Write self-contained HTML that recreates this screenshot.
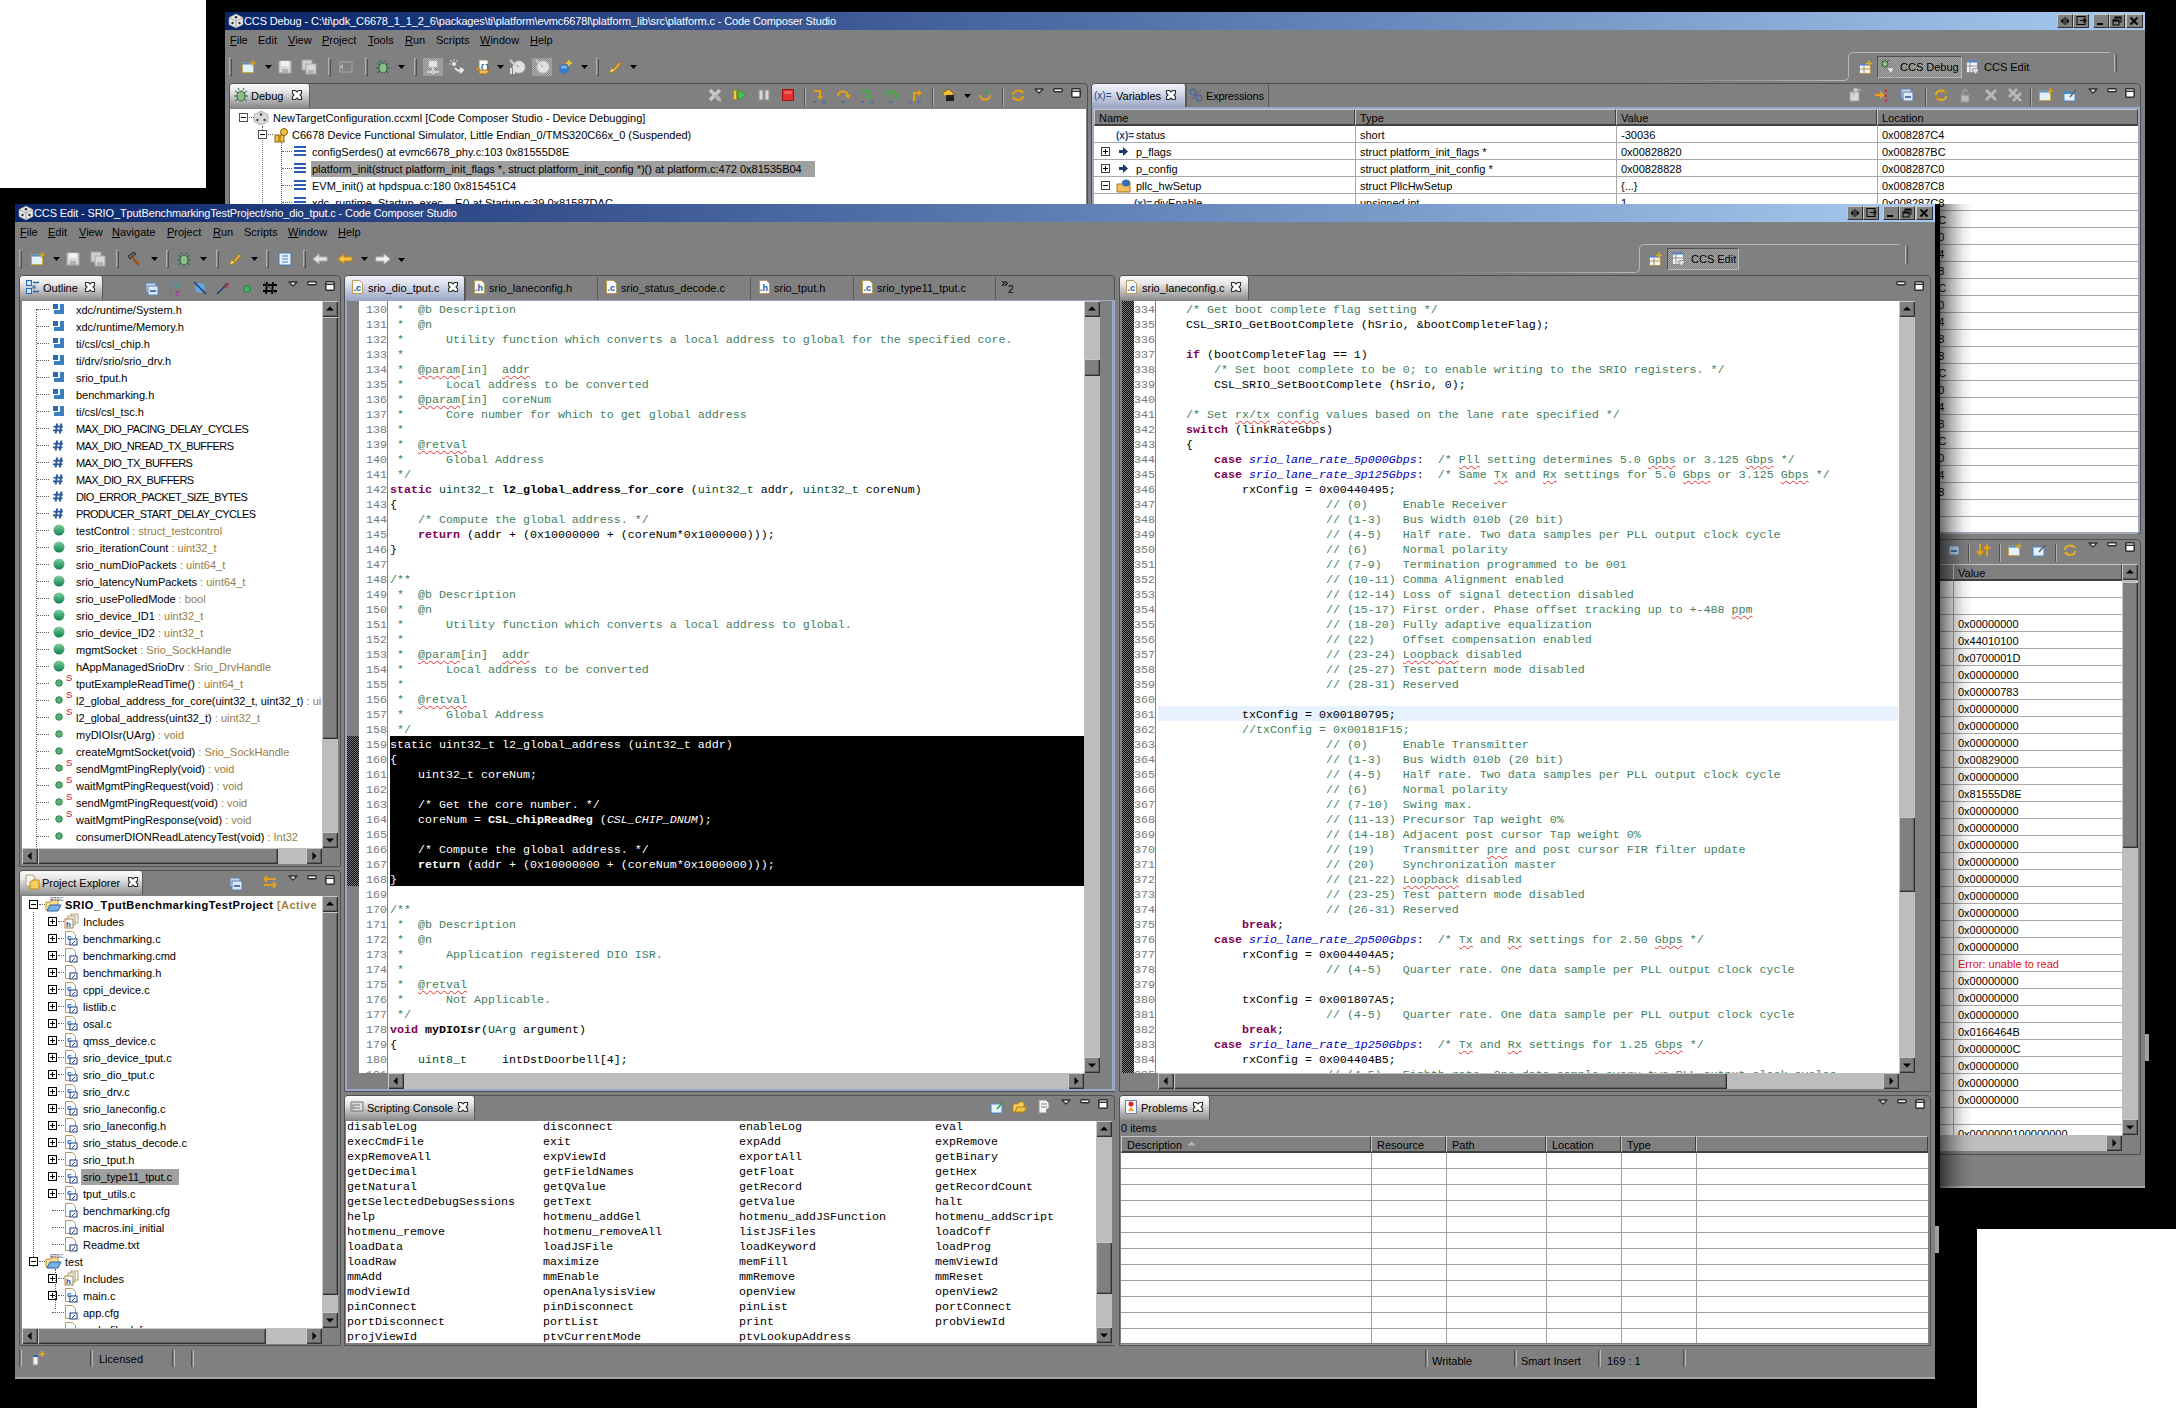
<!DOCTYPE html><html><head><meta charset="utf-8"><title>CCS</title><style>
*{margin:0;padding:0;box-sizing:border-box}
html,body{width:2176px;height:1408px;overflow:hidden;background:#000}
body{position:relative;font-family:"Liberation Sans",sans-serif;font-size:11px;color:#000}
div{position:absolute}
svg{display:block;overflow:visible}
.t{white-space:pre}
.m{font-family:"Liberation Mono",monospace;font-size:11.667px;white-space:pre;line-height:15px;height:15px}
.win{background:#808080}
.ttl{color:#fff;font-size:11px}
.pb{border:1px solid #505050;border-radius:4px 4px 0 0}
.tabg{background:linear-gradient(#fbfbfb,#e8e8e8 30%,#8e8e8e 95%);border-radius:3px 3px 0 0;border-right:1px solid #5a5a5a}
.tabb{background:linear-gradient(#f0f2f8,#dde2ee 30%,#9ea8c6 95%);border-radius:3px 3px 0 0;border-right:1px solid #5a5a5a}
.wh{background:#fff}
.b3{background:#808080;box-shadow:inset 1px 1px #c8c8c8,inset -1px -1px #303030,inset -2px -2px #606060}
.hdr{background:#808080;border-top:1px solid #c8c8c8;border-left:1px solid #c8c8c8;border-right:1px solid #404040;border-bottom:2px solid #404040}
.trough{background:#bdbdbd}
.cm{color:#3f7f5f}
.kw{color:#7f0055;font-weight:bold}
.fn{font-weight:bold}
.en{color:#0000c0;font-style:italic}
.ln{color:#787878}
.ty{color:#957d47}
.sep{border-left:1px solid #5a5a5a;border-right:1px solid #b8b8b8}
.ul{text-decoration:underline}

.sel .cm,.sel .kw,.sel .en,.sel .td{color:#fff}
.it{font-style:italic}
.td{color:#005032}
.sq{text-decoration:underline wavy #e83030;text-decoration-thickness:0.6px;text-underline-offset:1.5px}
u{text-decoration:underline;text-underline-offset:1px}
</style></head><body>
<div style="left:0px;top:0px;width:206px;height:188px;background:#fff"></div>
<div style="left:1977px;top:1229px;width:199px;height:179px;background:#fff"></div>
<div class="win" style="left:225px;top:12px;width:1920px;height:1176px;"></div>
<div style="left:225px;top:12px;width:1920px;height:18px;background:linear-gradient(to right,#0a246a,#a6caf0)"></div>
<div style="left:228px;top:13px;width:16px;height:16px"><svg width="16" height="16" viewBox="0 0 16 16"><path d="M8 1 L15 4.5 L15 11.5 L8 15 L1 11.5 L1 4.5Z" fill="#e8e8e8" stroke="#999" stroke-width="0.6"/><path d="M1 4.5 L8 8 L15 4.5 M8 8 L8 15" stroke="#888" stroke-width="0.8" fill="none"/><circle cx="8" cy="4.2" r="1.3" fill="#333"/><circle cx="4.5" cy="10" r="1.2" fill="#333"/><circle cx="11.5" cy="10" r="1.2" fill="#333"/></svg></div>
<div class="t" style="left:244px;top:12px;height:18px;line-height:18px;color:#fff;letter-spacing:-0.13px">CCS Debug - C:\ti\pdk_C6678_1_1_2_6\packages\ti\platform\evmc6678l\platform_lib\src\platform.c - Code Composer Studio</div>
<div style="left:2057px;top:14px;width:16px;height:14px;background:#808080;border-top:1px solid #c8c8c8;border-left:1px solid #c8c8c8;border-right:1px solid #303030;border-bottom:1px solid #303030"></div>
<div style="left:2060px;top:16px;width:10px;height:10px"><svg width="10" height="10"><path d="M0.5 5 L3.5 2 L3.5 8Z M9.5 5 L6.5 2 L6.5 8Z" fill="#000"/><rect x="4.5" y="1" width="1" height="8" fill="#000"/></svg></div>
<div style="left:2073px;top:14px;width:16px;height:14px;background:#808080;border-top:1px solid #c8c8c8;border-left:1px solid #c8c8c8;border-right:1px solid #303030;border-bottom:1px solid #303030"></div>
<div style="left:2076px;top:15px;width:11px;height:11px"><svg width="11" height="11"><rect x="1" y="1.5" width="8" height="8" fill="none" stroke="#000"/><path d="M4 5.5 L10 5.5 M7.5 3.5 L10 5.5 L7.5 7.5" stroke="#000" fill="none" stroke-width="1.2"/></svg></div>
<div style="left:2093px;top:14px;width:16px;height:14px;background:#808080;border-top:1px solid #c8c8c8;border-left:1px solid #c8c8c8;border-right:1px solid #303030;border-bottom:1px solid #303030"></div>
<div style="left:2097px;top:23px;width:6px;height:2px;background:#000"></div>
<div style="left:2109px;top:14px;width:16px;height:14px;background:#808080;border-top:1px solid #c8c8c8;border-left:1px solid #c8c8c8;border-right:1px solid #303030;border-bottom:1px solid #303030"></div>
<div style="left:2112px;top:16px;width:10px;height:10px"><svg width="10" height="10"><rect x="3" y="1" width="6" height="5" fill="none" stroke="#000" stroke-width="1"/><rect x="3" y="1" width="6" height="1.5" fill="#000"/><rect x="1" y="4" width="6" height="5" fill="#808080" stroke="#000" stroke-width="1"/><rect x="1" y="4" width="6" height="1.5" fill="#000"/></svg></div>
<div style="left:2126px;top:14px;width:17px;height:14px;background:#808080;border-top:1px solid #c8c8c8;border-left:1px solid #c8c8c8;border-right:1px solid #303030;border-bottom:1px solid #303030"></div>
<div style="left:2129px;top:16px;width:10px;height:10px"><svg width="10" height="10"><path d="M1.5 1.5 L8.5 8.5 M8.5 1.5 L1.5 8.5" stroke="#000" stroke-width="1.8"/></svg></div>
<div class="t" style="left:230px;top:30px;height:20px;line-height:20px"><u>F</u>ile</div>
<div class="t" style="left:258px;top:30px;height:20px;line-height:20px;">Edit</div>
<div class="t" style="left:288px;top:30px;height:20px;line-height:20px"><u>V</u>iew</div>
<div class="t" style="left:322px;top:30px;height:20px;line-height:20px"><u>P</u>roject</div>
<div class="t" style="left:368px;top:30px;height:20px;line-height:20px"><u>T</u>ools</div>
<div class="t" style="left:405px;top:30px;height:20px;line-height:20px"><u>R</u>un</div>
<div class="t" style="left:436px;top:30px;height:20px;line-height:20px;">Scripts</div>
<div class="t" style="left:480px;top:30px;height:20px;line-height:20px"><u>W</u>indow</div>
<div class="t" style="left:530px;top:30px;height:20px;line-height:20px"><u>H</u>elp</div>
<div style="left:229px;top:58px;width:3px;height:18px;border-left:1px solid #b0b0b0;border-right:1px solid #505050;border-top:1px solid #b0b0b0;border-bottom:1px solid #505050"></div>
<div style="left:241px;top:59px;width:16px;height:16px"><svg width="16" height="16" viewBox="0 0 16 16"><rect x="1.5" y="3.5" width="11" height="10" fill="#e4f0fb" stroke="#c9a84a"/><rect x="1.5" y="3.5" width="11" height="2" fill="#4a8ad0"/><path d="M12 1 L12 7 M9 4 L15 4" stroke="#d4a020" stroke-width="1.6"/></svg></div>
<div style="left:265px;top:65px;width:7px;height:4px"><svg width="7" height="4"><path d="M0 0 L7 0 L3.5 4Z" fill="#000"/></svg></div>
<div style="left:277px;top:59px;width:16px;height:16px"><svg width="16" height="16" viewBox="0 0 16 16"><rect x="2" y="2" width="12" height="12" fill="#d8d8d8" stroke="#a8a8a8"/><rect x="4" y="2" width="8" height="5" fill="#f0f0f0"/><rect x="5" y="10" width="6" height="4" fill="#b0b0b0"/></svg></div>
<div style="left:301px;top:59px;width:16px;height:16px"><svg width="16" height="16" viewBox="0 0 16 16"><rect x="1" y="1" width="10" height="10" fill="#d0d0d0" stroke="#a0a0a0"/><rect x="5" y="5" width="10" height="10" fill="#d8d8d8" stroke="#a8a8a8"/><rect x="7" y="11" width="6" height="4" fill="#b0b0b0"/></svg></div>
<div style="left:328px;top:58px;width:3px;height:18px;border-left:1px solid #b0b0b0;border-right:1px solid #505050;border-top:1px solid #b0b0b0;border-bottom:1px solid #505050"></div>
<div style="left:338px;top:59px;width:16px;height:16px"><svg width="16" height="16" viewBox="0 0 16 16"><rect x="2" y="3" width="12" height="10" fill="none" stroke="#a8a8a8"/><path d="M1 8 L5 5 L5 11Z" fill="#b0b0b0"/></svg></div>
<div style="left:365px;top:58px;width:3px;height:18px;border-left:1px solid #b0b0b0;border-right:1px solid #505050;border-top:1px solid #b0b0b0;border-bottom:1px solid #505050"></div>
<div style="left:375px;top:59px;width:16px;height:16px"><svg width="16" height="16" viewBox="0 0 16 16"><ellipse cx="8" cy="9" rx="4" ry="5" fill="#8cc080" stroke="#2c6050"/><path d="M2 4 L5 6 M14 4 L11 6 M1 9 L4 9 M15 9 L12 9 M2 14 L5 12 M14 14 L11 12 M6 3 L5 1 M10 3 L11 1" stroke="#2c6050" stroke-width="1"/></svg></div>
<div style="left:398px;top:65px;width:7px;height:4px"><svg width="7" height="4"><path d="M0 0 L7 0 L3.5 4Z" fill="#000"/></svg></div>
<div style="left:414px;top:58px;width:3px;height:18px;border-left:1px solid #b0b0b0;border-right:1px solid #505050;border-top:1px solid #b0b0b0;border-bottom:1px solid #505050"></div>
<div style="left:423px;top:58px;width:20px;height:18px;background-color:#8a8a8a;background-image:linear-gradient(45deg,#b0b0b0 25%,transparent 25%,transparent 75%,#b0b0b0 75%),linear-gradient(45deg,#b0b0b0 25%,transparent 25%,transparent 75%,#b0b0b0 75%);background-size:2px 2px;background-position:0 0,1px 1px"></div>
<div style="left:425px;top:59px;width:16px;height:16px"><svg width="16" height="16" viewBox="0 0 16 16"><rect x="4" y="2" width="8" height="6" fill="#e8e8e8" stroke="#c8c8c8"/><path d="M8 8 L8 13 M2 13 L14 13" stroke="#e0e0e0" stroke-width="1.5"/><circle cx="8" cy="13" r="1.8" fill="#b8c8b8" stroke="#e0e0e0"/></svg></div>
<div style="left:449px;top:59px;width:16px;height:16px"><svg width="16" height="16" viewBox="0 0 16 16"><circle cx="5" cy="5" r="2" fill="#e8e8e8"/><path d="M1 1 L3 3 M5 0 L5 2 M9 1 L7 3 M0 5 L2 5" stroke="#d8d8d8"/><path d="M6 9 C8 12 11 12 13 11 M11 9 L14 11 L11 14" stroke="#e8e8e8" stroke-width="2" fill="none"/></svg></div>
<div style="left:474px;top:59px;width:16px;height:16px"><svg width="16" height="16" viewBox="0 0 16 16"><rect x="5" y="1" width="9" height="11" fill="#fff" stroke="#909070"/><text x="6" y="10" font-size="8" font-weight="bold" fill="#106080" font-family="Liberation Mono">{}</text><path d="M1 9 L5 9 L5 15 L13 15 L15 11 L3 11Z" fill="#f0c060" stroke="#b07020"/></svg></div>
<div style="left:497px;top:65px;width:7px;height:4px"><svg width="7" height="4"><path d="M0 0 L7 0 L3.5 4Z" fill="#000"/></svg></div>
<div style="left:509px;top:59px;width:18px;height:16px"><svg width="18" height="16" viewBox="0 0 18 16"><circle cx="10" cy="8" r="6" fill="#e0e0e0" stroke="#c8c8c8"/><path d="M10 8 L7 6" stroke="#909090"/><rect x="1" y="9" width="2" height="6" fill="#e0e0e0"/><rect x="4" y="7" width="2" height="8" fill="#e0e0e0"/><path d="M1 1 L6 6" stroke="#d0d0d0" stroke-width="2"/></svg></div>
<div style="left:532px;top:58px;width:20px;height:18px;background-color:#8a8a8a;background-image:linear-gradient(45deg,#b0b0b0 25%,transparent 25%,transparent 75%,#b0b0b0 75%),linear-gradient(45deg,#b0b0b0 25%,transparent 25%,transparent 75%,#b0b0b0 75%);background-size:2px 2px;background-position:0 0,1px 1px"></div>
<div style="left:534px;top:59px;width:16px;height:16px"><svg width="16" height="16" viewBox="0 0 16 16"><circle cx="9" cy="8" r="6" fill="#e0e0e0" stroke="#c8c8c8"/><path d="M9 8 L6 6" stroke="#909090"/><path d="M2 1 L8 7" stroke="#d0d0d0" stroke-width="2"/></svg></div>
<div style="left:558px;top:59px;width:16px;height:16px"><svg width="16" height="16" viewBox="0 0 16 16"><circle cx="6" cy="10" r="5" fill="#3a78c8"/><ellipse cx="6" cy="8" rx="3" ry="1.5" fill="#80b0e8"/><path d="M11 1 L11 7 M8 4 L14 4" stroke="#e8c030" stroke-width="2"/></svg></div>
<div style="left:581px;top:65px;width:7px;height:4px"><svg width="7" height="4"><path d="M0 0 L7 0 L3.5 4Z" fill="#000"/></svg></div>
<div style="left:596px;top:58px;width:3px;height:18px;border-left:1px solid #b0b0b0;border-right:1px solid #505050;border-top:1px solid #b0b0b0;border-bottom:1px solid #505050"></div>
<div style="left:606px;top:59px;width:16px;height:16px"><svg width="16" height="16" viewBox="0 0 16 16"><path d="M3 14 L6 9 L9 12 Z" fill="#f8e8a0" stroke="#c08020"/><path d="M7 10 L13 3 L15 5 L9 12Z" fill="#e0b040" stroke="#a07010"/></svg></div>
<div style="left:630px;top:65px;width:7px;height:4px"><svg width="7" height="4"><path d="M0 0 L7 0 L3.5 4Z" fill="#000"/></svg></div>
<div style="left:1650px;top:80px;width:194px;height:1px;background:linear-gradient(to right,rgba(184,184,184,0),#b8b8b8)"></div>
<div style="left:1843px;top:52px;width:268px;height:30px"><svg width="268" height="30"><path d="M0 28.5 L1.5 28.5 Q5.5 28.5 5.5 24.5 L5.5 4.5 Q5.5 0.5 9.5 0.5 L267 0.5" fill="none" stroke="#b8b8b8" stroke-width="1"/></svg></div>
<div style="left:1857px;top:60px;width:16px;height:16px"><svg width="16" height="16" viewBox="0 0 16 16"><rect x="2.5" y="3.5" width="11" height="10" fill="#eef4fa" stroke="#b09050"/><rect x="2.5" y="3.5" width="11" height="2" fill="#4a80c8"/><path d="M2.5 9 L13.5 9 M7 5.5 L7 13.5" stroke="#b09050"/><path d="M12 0.5 L12 6.5 M9 3.5 L15 3.5" stroke="#e0b020" stroke-width="1.6"/></svg></div>
<div style="left:1877px;top:56px;width:85px;height:22px;background-color:#808080;background-image:linear-gradient(45deg,#a8a8a8 25%,transparent 25%,transparent 75%,#a8a8a8 75%),linear-gradient(45deg,#a8a8a8 25%,transparent 25%,transparent 75%,#a8a8a8 75%);background-size:2px 2px;background-position:0 0,1px 1px;border-top:1px solid #505050;border-left:1px solid #505050;border-bottom:1px solid #b8b8b8;border-right:1px solid #b8b8b8"></div>
<div style="left:1880px;top:59px;width:16px;height:16px"><svg width="16" height="16" viewBox="0 0 16 16"><circle cx="5" cy="5" r="3" fill="#8cc080" stroke="#2c6050"/><path d="M1 1 L3 3 M9 1 L7 3 M1 6 L2 6 M5 0 L5 1" stroke="#2c6050"/><path d="M7 10 C7 8 14 8 14 10 L11 15Z" fill="#e0e0e0" stroke="#707070" stroke-width="0.8"/></svg></div>
<div class="t" style="left:1900px;top:57px;height:20px;line-height:20px;">CCS Debug</div>
<div style="left:1965px;top:59px;width:16px;height:16px"><svg width="16" height="16" viewBox="0 0 16 16"><rect x="1.5" y="1.5" width="11" height="12" fill="#eef4fa" stroke="#909090"/><rect x="1.5" y="1.5" width="11" height="2" fill="#4a80c8"/><path d="M1.5 7 L12.5 7 M5 3.5 L5 13.5" stroke="#909090"/><path d="M7 11 C7 9 14 9 14 11 L10.5 15.5Z" fill="#e0e0e0" stroke="#707070" stroke-width="0.8"/></svg></div>
<div class="t" style="left:1984px;top:57px;height:20px;line-height:20px;">CCS Edit</div>
<div style="left:2114px;top:54px;width:3px;height:18px;border-left:1px solid #b8b8b8;border-right:1px solid #505050;border-radius:1px"></div>
<div class="pb" style="left:229px;top:83px;width:859px;height:1200px;"></div>
<div class="tabg" style="left:230px;top:84px;width:80px;height:24px"></div>
<div style="left:233px;top:87px;width:16px;height:16px"><svg width="16" height="16" viewBox="0 0 16 16"><ellipse cx="8" cy="9" rx="4" ry="5" fill="#8cc080" stroke="#2c6050"/><path d="M2 4 L5 6 M14 4 L11 6 M1 9 L4 9 M15 9 L12 9 M2 14 L5 12 M14 14 L11 12 M6 3 L5 1 M10 3 L11 1" stroke="#2c6050" stroke-width="1"/></svg></div>
<div class="t" style="left:251px;top:86px;height:20px;line-height:20px;">Debug</div>
<div style="left:292px;top:90px;width:10px;height:10px"><svg width="10" height="10"><path d="M0.5 0.5 L3.5 0.5 L5 2 L6.5 0.5 L9.5 0.5 L9.5 3.5 L8 5 L9.5 6.5 L9.5 9.5 L6.5 9.5 L5 8 L3.5 9.5 L0.5 9.5 L0.5 6.5 L2 5 L0.5 3.5Z" fill="#fff" stroke="#303030" stroke-width="1.1"/></svg></div>
<div style="left:707px;top:87px;width:16px;height:16px"><svg width="16" height="16" viewBox="0 0 16 16"><path d="M3 3 L13 13 M13 3 L3 13" stroke="#c8c8c8" stroke-width="3.5"/><path d="M8 8 L14 14" stroke="#b0b0b0" stroke-width="2"/></svg></div>
<div style="left:732px;top:87px;width:16px;height:16px"><svg width="16" height="16" viewBox="0 0 16 16"><rect x="1.5" y="3.5" width="3" height="9" fill="#f0d040" stroke="#b09020"/><path d="M6 3 L14 8 L6 13Z" fill="#50c050" stroke="#309030" stroke-width="0.8"/></svg></div>
<div style="left:756px;top:87px;width:16px;height:16px"><svg width="16" height="16" viewBox="0 0 16 16"><rect x="3" y="3" width="4" height="10" fill="#d8d8d8" stroke="#909090"/><rect x="9" y="3" width="4" height="10" fill="#d8d8d8" stroke="#909090"/></svg></div>
<div style="left:780px;top:87px;width:16px;height:16px"><svg width="16" height="16" viewBox="0 0 16 16"><rect x="2.5" y="2.5" width="11" height="11" fill="#e83030" stroke="#a01010"/><rect x="4" y="4" width="8" height="3" fill="#f06060"/></svg></div>
<div style="left:804px;top:88px;width:2px;height:18px;border-left:1px solid #505050;border-right:1px solid #b0b0b0"></div>
<div style="left:812px;top:87px;width:16px;height:16px"><svg width="16" height="16" viewBox="0 0 16 16"><path d="M2 4 L8 4 L8 10" stroke="#e8a010" stroke-width="2" fill="none"/><path d="M5 9 L8 13 L11 9Z" fill="#e8a010"/><path d="M1 15 L4 15 M10 15 L14 15" stroke="#3060b0" stroke-width="1"/></svg></div>
<div style="left:836px;top:87px;width:16px;height:16px"><svg width="16" height="16" viewBox="0 0 16 16"><path d="M2 9 C2 3 12 3 12 9" stroke="#e8a010" stroke-width="2" fill="none"/><path d="M9 8 L12 12 L15 8Z" fill="#e8a010"/><path d="M5 15 L9 15" stroke="#3060b0" stroke-width="1"/></svg></div>
<div style="left:860px;top:87px;width:16px;height:16px"><svg width="16" height="16" viewBox="0 0 16 16"><path d="M2 4 L8 4 L8 10" stroke="#40b040" stroke-width="2" fill="none"/><path d="M5 9 L8 13 L11 9Z" fill="#40b040"/><path d="M1 15 L4 15 M10 15 L14 15" stroke="#3060b0" stroke-width="1"/></svg></div>
<div style="left:884px;top:87px;width:16px;height:16px"><svg width="16" height="16" viewBox="0 0 16 16"><path d="M2 9 C2 3 12 3 12 9" stroke="#40b040" stroke-width="2" fill="none"/><path d="M9 8 L12 12 L15 8Z" fill="#40b040"/><path d="M5 15 L9 15" stroke="#3060b0" stroke-width="1"/></svg></div>
<div style="left:908px;top:87px;width:16px;height:16px"><svg width="16" height="16" viewBox="0 0 16 16"><path d="M6 14 L6 6 L11 6" stroke="#e8a010" stroke-width="2" fill="none"/><path d="M10 3 L14 6 L10 9Z" fill="#e8a010"/><path d="M1 15 L3 15 M9 15 L13 15" stroke="#3060b0" stroke-width="1"/></svg></div>
<div style="left:932px;top:88px;width:2px;height:18px;border-left:1px solid #505050;border-right:1px solid #b0b0b0"></div>
<div style="left:940px;top:87px;width:16px;height:16px"><svg width="16" height="16" viewBox="0 0 16 16"><path d="M2 6 L9 2 L14 7 L7 12Z" fill="#f0c030" stroke="#806010"/><rect x="6" y="8" width="8" height="6" fill="#202020"/></svg></div>
<div style="left:964px;top:94px;width:7px;height:4px"><svg width="7" height="4"><path d="M0 0 L7 0 L3.5 4Z" fill="#000"/></svg></div>
<div style="left:977px;top:87px;width:16px;height:16px"><svg width="16" height="16" viewBox="0 0 16 16"><path d="M3 8 C3 14 13 14 13 8" stroke="#e8a010" stroke-width="2" fill="none"/><path d="M8 2 L12 5 L8 8Z" fill="#40a040"/></svg></div>
<div style="left:1002px;top:88px;width:2px;height:18px;border-left:1px solid #505050;border-right:1px solid #b0b0b0"></div>
<div style="left:1010px;top:87px;width:16px;height:16px"><svg width="16" height="16" viewBox="0 0 16 16"><path d="M3 8 C3 3 11 2 13 6 M13 9 C13 14 5 14 3 10" stroke="#e8a010" stroke-width="2" fill="none"/></svg></div>
<div style="left:1034px;top:88px;width:10px;height:6px"><svg width="10" height="6"><path d="M1 1 L9 1 L5 5Z" fill="#fff" stroke="#303030" stroke-width="1.3" stroke-linejoin="round"/></svg></div>
<div style="left:1053px;top:88px;width:10px;height:5px"><svg width="10" height="5"><rect x="0.8" y="0.8" width="8.4" height="3" rx="1" fill="#fff" stroke="#303030" stroke-width="1.5"/></svg></div>
<div style="left:1071px;top:88px;width:10px;height:10px"><svg width="10" height="10"><rect x="0.8" y="0.8" width="8.4" height="8.4" rx="1" fill="#fff" stroke="#303030" stroke-width="1.5"/><rect x="1" y="2.6" width="8" height="1.4" fill="#303030"/></svg></div>
<div class="wh" style="left:230px;top:109px;width:856px;height:110px;"></div>
<div class="t" style="left:273px;top:110px;height:17px;line-height:17px;">NewTargetConfiguration.ccxml [Code Composer Studio - Device Debugging]</div>
<div class="t" style="left:292px;top:127px;height:17px;line-height:17px;">C6678 Device Functional Simulator, Little Endian_0/TMS320C66x_0 (Suspended)</div>
<div class="t" style="left:312px;top:144px;height:17px;line-height:17px;">configSerdes() at evmc6678_phy.c:103 0x81555D8E</div>
<div style="left:311px;top:161px;width:504px;height:16px;background:#a0a0a0"></div>
<div class="t" style="left:312px;top:161px;height:17px;line-height:17px;">platform_init(struct platform_init_flags *, struct platform_init_config *)() at platform.c:472 0x81535B04</div>
<div class="t" style="left:312px;top:178px;height:17px;line-height:17px;">EVM_init() at hpdspua.c:180 0x815451C4</div>
<div class="t" style="left:312px;top:195px;height:17px;line-height:17px;">xdc_runtime_Startup_exec__E() at Startup.c:39 0x81587DAC</div>
<div style="left:239px;top:113px;width:9px;height:9px;border:1px solid #505050;background:#fff"></div>
<div style="left:241px;top:117px;width:5px;height:1px;background:#000"></div>
<div style="left:249px;top:117px;width:5px;height:1px;border-top:1px dotted #606060"></div>
<div style="left:262px;top:126px;width:1px;height:4px;border-left:1px dotted #606060"></div>
<div style="left:268px;top:134px;width:5px;height:1px;border-top:1px dotted #606060"></div>
<div style="left:262px;top:129px;width:1px;height:90px;border-left:1px dotted #808080"></div>
<div style="left:258px;top:130px;width:9px;height:9px;border:1px solid #505050;background:#fff"></div>
<div style="left:260px;top:134px;width:5px;height:1px;background:#000"></div>
<div style="left:253px;top:110px;width:16px;height:16px"><svg width="16" height="16" viewBox="0 0 16 16"><path d="M8 1 L15 4.5 L15 11.5 L8 15 L1 11.5 L1 4.5Z" fill="#d8d8d8" stroke="#909090" stroke-width="0.6"/><circle cx="8" cy="4.5" r="1.3" fill="#444"/><circle cx="4.5" cy="10" r="1.2" fill="#444"/><circle cx="11.5" cy="10" r="1.2" fill="#444"/></svg></div>
<div style="left:273px;top:127px;width:16px;height:16px"><svg width="16" height="16" viewBox="0 0 16 16"><rect x="2" y="8" width="4" height="7" fill="#f0c040" stroke="#906010"/><rect x="7" y="8" width="4" height="7" fill="#f0c040" stroke="#906010"/><circle cx="11" cy="5" r="3.5" fill="#f0c040" stroke="#906010"/></svg></div>
<div style="left:281px;top:143px;width:1px;height:75px;border-left:1px dotted #606060"></div>
<div style="left:282px;top:151px;width:10px;height:1px;border-top:1px dotted #606060"></div>
<div style="left:294px;top:146px;width:12px;height:2px;background:#2a5db0"></div>
<div style="left:294px;top:150px;width:12px;height:2px;background:#2a5db0"></div>
<div style="left:294px;top:154px;width:12px;height:2px;background:#2a5db0"></div>
<div style="left:282px;top:168px;width:10px;height:1px;border-top:1px dotted #606060"></div>
<div style="left:294px;top:163px;width:12px;height:2px;background:#2a5db0"></div>
<div style="left:294px;top:167px;width:12px;height:2px;background:#2a5db0"></div>
<div style="left:294px;top:171px;width:12px;height:2px;background:#2a5db0"></div>
<div style="left:282px;top:185px;width:10px;height:1px;border-top:1px dotted #606060"></div>
<div style="left:294px;top:180px;width:12px;height:2px;background:#2a5db0"></div>
<div style="left:294px;top:184px;width:12px;height:2px;background:#2a5db0"></div>
<div style="left:294px;top:188px;width:12px;height:2px;background:#2a5db0"></div>
<div style="left:282px;top:202px;width:10px;height:1px;border-top:1px dotted #606060"></div>
<div style="left:294px;top:197px;width:12px;height:2px;background:#2a5db0"></div>
<div style="left:294px;top:201px;width:12px;height:2px;background:#2a5db0"></div>
<div style="left:294px;top:205px;width:12px;height:2px;background:#2a5db0"></div>
<div class="pb" style="left:1091px;top:83px;width:1050px;height:451px;"></div>
<div class="tabb" style="left:1092px;top:84px;width:94px;height:24px"></div>
<div style="left:1094px;top:86px;height:20px;line-height:20px;color:#1e4a80;font-size:10px" class="t">(x)=</div>
<div class="t" style="left:1116px;top:86px;height:20px;line-height:20px;">Variables</div>
<div style="left:1166px;top:90px;width:10px;height:10px"><svg width="10" height="10"><path d="M0.5 0.5 L3.5 0.5 L5 2 L6.5 0.5 L9.5 0.5 L9.5 3.5 L8 5 L9.5 6.5 L9.5 9.5 L6.5 9.5 L5 8 L3.5 9.5 L0.5 9.5 L0.5 6.5 L2 5 L0.5 3.5Z" fill="#fff" stroke="#303030" stroke-width="1.1"/></svg></div>
<div style="left:1186px;top:84px;width:1px;height:24px;background:#5a5a5a"></div>
<div style="left:1188px;top:87px;width:16px;height:16px"><svg width="16" height="16" viewBox="0 0 16 16"><circle cx="5" cy="5" r="3" fill="none" stroke="#2a5db0"/><circle cx="11" cy="11" r="3" fill="none" stroke="#2a5db0"/><path d="M3 13 L13 3" stroke="#606060"/></svg></div>
<div class="t" style="left:1206px;top:86px;height:20px;line-height:20px;letter-spacing:-0.2px">Expressions</div>
<div style="left:1268px;top:84px;width:1px;height:24px;background:#5a5a5a"></div>
<div style="left:1848px;top:87px;width:16px;height:16px"><svg width="16" height="16" viewBox="0 0 16 16"><rect x="2" y="5" width="9" height="9" fill="#d8d8d8" stroke="#a0a0a0"/><path d="M6 1 L6 8 M6 1 L12 3 L6 5" stroke="#b0b0b0" stroke-width="1.2" fill="#e0e0e0"/></svg></div>
<div style="left:1874px;top:87px;width:16px;height:16px"><svg width="16" height="16" viewBox="0 0 16 16"><path d="M1 8 L9 8 M6 5 L9 8 L6 11" stroke="#f0a010" stroke-width="2" fill="none"/><path d="M12 2 L12 5 M12 7 L12 10 M12 12 L12 15" stroke="#e02020" stroke-width="1.5"/></svg></div>
<div style="left:1899px;top:87px;width:16px;height:16px"><svg width="16" height="16" viewBox="0 0 16 16"><rect x="2" y="2" width="10" height="9" fill="#c8d8e8" stroke="#6080b0"/><rect x="4" y="5" width="10" height="9" fill="#dce8f4" stroke="#6080b0"/><path d="M6 10 L12 10" stroke="#2050a0" stroke-width="1.5"/></svg></div>
<div style="left:1925px;top:88px;width:2px;height:18px;border-left:1px solid #505050;border-right:1px solid #b0b0b0"></div>
<div style="left:1933px;top:87px;width:16px;height:16px"><svg width="16" height="16" viewBox="0 0 16 16"><path d="M3 8 C3 3 11 2 13 6 M13 9 C13 14 5 14 3 10" stroke="#e8b020" stroke-width="2" fill="none"/><path d="M11 3 L14 6 L10 7Z M5 13 L2 10 L6 9Z" fill="#c08010"/></svg></div>
<div style="left:1958px;top:87px;width:16px;height:16px"><svg width="16" height="16" viewBox="0 0 16 16"><rect x="3" y="8" width="8" height="7" fill="#b8b8b8" stroke="#909090"/><path d="M5 8 L5 5 C5 2 9 2 9 5" stroke="#a0a0a0" stroke-width="1.5" fill="none"/></svg></div>
<div style="left:1983px;top:87px;width:16px;height:16px"><svg width="16" height="16" viewBox="0 0 16 16"><path d="M3 3 L13 13 M13 3 L3 13" stroke="#b8b8b8" stroke-width="3"/></svg></div>
<div style="left:2007px;top:87px;width:16px;height:16px"><svg width="16" height="16" viewBox="0 0 16 16"><path d="M2 2 L10 10 M10 2 L2 10" stroke="#b8b8b8" stroke-width="2.5"/><path d="M6 6 L14 14 M14 6 L6 14" stroke="#b8b8b8" stroke-width="2.5"/></svg></div>
<div style="left:2030px;top:88px;width:2px;height:18px;border-left:1px solid #505050;border-right:1px solid #b0b0b0"></div>
<div style="left:2038px;top:87px;width:16px;height:16px"><svg width="16" height="16" viewBox="0 0 16 16"><rect x="1.5" y="3.5" width="11" height="10" fill="#e4f0fb" stroke="#c9a84a"/><rect x="1.5" y="3.5" width="11" height="2" fill="#4a8ad0"/><path d="M12 1 L12 7 M9 4 L15 4" stroke="#d4a020" stroke-width="1.6"/></svg></div>
<div style="left:2062px;top:87px;width:16px;height:16px"><svg width="16" height="16" viewBox="0 0 16 16"><rect x="2" y="5" width="11" height="9" fill="#e4f0fb" stroke="#4a8ad0"/><rect x="2" y="5" width="11" height="2" fill="#4a8ad0"/><path d="M8 10 L14 3" stroke="#606060" stroke-width="1.5"/></svg></div>
<div style="left:2088px;top:88px;width:10px;height:6px"><svg width="10" height="6"><path d="M1 1 L9 1 L5 5Z" fill="#fff" stroke="#303030" stroke-width="1.3" stroke-linejoin="round"/></svg></div>
<div style="left:2107px;top:88px;width:10px;height:5px"><svg width="10" height="5"><rect x="0.8" y="0.8" width="8.4" height="3" rx="1" fill="#fff" stroke="#303030" stroke-width="1.5"/></svg></div>
<div style="left:2125px;top:88px;width:10px;height:10px"><svg width="10" height="10"><rect x="0.8" y="0.8" width="8.4" height="8.4" rx="1" fill="#fff" stroke="#303030" stroke-width="1.5"/><rect x="1" y="2.6" width="8" height="1.4" fill="#303030"/></svg></div>
<div style="left:1092px;top:107px;width:1048px;height:426px;background:#9ca8c8"></div>
<div class="wh" style="left:1094px;top:109px;width:1044px;height:423px;"></div>
<div class="hdr" style="left:1094px;top:109px;width:261px;height:17px;"></div>
<div class="t" style="left:1099px;top:110px;height:17px;line-height:17px;">Name</div>
<div class="hdr" style="left:1355px;top:109px;width:261px;height:17px;"></div>
<div class="t" style="left:1360px;top:110px;height:17px;line-height:17px;">Type</div>
<div class="hdr" style="left:1616px;top:109px;width:261px;height:17px;"></div>
<div class="t" style="left:1621px;top:110px;height:17px;line-height:17px;">Value</div>
<div class="hdr" style="left:1877px;top:109px;width:261px;height:17px;"></div>
<div class="t" style="left:1882px;top:110px;height:17px;line-height:17px;">Location</div>
<div style="left:1094px;top:142px;width:1044px;height:1px;background:#a8a8a8"></div>
<div style="left:1355px;top:126px;width:1px;height:17px;background:#a8a8a8"></div>
<div style="left:1616px;top:126px;width:1px;height:17px;background:#a8a8a8"></div>
<div style="left:1877px;top:126px;width:1px;height:17px;background:#a8a8a8"></div>
<div class="t" style="left:1136px;top:127px;height:17px;line-height:17px;">status</div>
<div class="t" style="left:1360px;top:127px;height:17px;line-height:17px;">short</div>
<div class="t" style="left:1621px;top:127px;height:17px;line-height:17px;">-30036</div>
<div class="t" style="left:1882px;top:127px;height:17px;line-height:17px;">0x008287C4</div>
<div style="left:1094px;top:159px;width:1044px;height:1px;background:#a8a8a8"></div>
<div style="left:1355px;top:143px;width:1px;height:17px;background:#a8a8a8"></div>
<div style="left:1616px;top:143px;width:1px;height:17px;background:#a8a8a8"></div>
<div style="left:1877px;top:143px;width:1px;height:17px;background:#a8a8a8"></div>
<div class="t" style="left:1136px;top:144px;height:17px;line-height:17px;">p_flags</div>
<div class="t" style="left:1360px;top:144px;height:17px;line-height:17px;">struct platform_init_flags *</div>
<div class="t" style="left:1621px;top:144px;height:17px;line-height:17px;">0x00828820</div>
<div class="t" style="left:1882px;top:144px;height:17px;line-height:17px;">0x008287BC</div>
<div style="left:1094px;top:176px;width:1044px;height:1px;background:#a8a8a8"></div>
<div style="left:1355px;top:160px;width:1px;height:17px;background:#a8a8a8"></div>
<div style="left:1616px;top:160px;width:1px;height:17px;background:#a8a8a8"></div>
<div style="left:1877px;top:160px;width:1px;height:17px;background:#a8a8a8"></div>
<div class="t" style="left:1136px;top:161px;height:17px;line-height:17px;">p_config</div>
<div class="t" style="left:1360px;top:161px;height:17px;line-height:17px;">struct platform_init_config *</div>
<div class="t" style="left:1621px;top:161px;height:17px;line-height:17px;">0x00828828</div>
<div class="t" style="left:1882px;top:161px;height:17px;line-height:17px;">0x008287C0</div>
<div style="left:1094px;top:193px;width:1044px;height:1px;background:#a8a8a8"></div>
<div style="left:1355px;top:177px;width:1px;height:17px;background:#a8a8a8"></div>
<div style="left:1616px;top:177px;width:1px;height:17px;background:#a8a8a8"></div>
<div style="left:1877px;top:177px;width:1px;height:17px;background:#a8a8a8"></div>
<div class="t" style="left:1136px;top:178px;height:17px;line-height:17px;">pllc_hwSetup</div>
<div class="t" style="left:1360px;top:178px;height:17px;line-height:17px;">struct PllcHwSetup</div>
<div class="t" style="left:1621px;top:178px;height:17px;line-height:17px;">{...}</div>
<div class="t" style="left:1882px;top:178px;height:17px;line-height:17px;">0x008287C8</div>
<div style="left:1094px;top:210px;width:1044px;height:1px;background:#a8a8a8"></div>
<div style="left:1355px;top:194px;width:1px;height:17px;background:#a8a8a8"></div>
<div style="left:1616px;top:194px;width:1px;height:17px;background:#a8a8a8"></div>
<div style="left:1877px;top:194px;width:1px;height:17px;background:#a8a8a8"></div>
<div class="t" style="left:1154px;top:195px;height:17px;line-height:17px;">divEnable</div>
<div class="t" style="left:1360px;top:195px;height:17px;line-height:17px;">unsigned int</div>
<div class="t" style="left:1621px;top:195px;height:17px;line-height:17px;">1</div>
<div class="t" style="left:1882px;top:195px;height:17px;line-height:17px;">0x008287C8</div>
<div style="left:1094px;top:227px;width:1044px;height:1px;background:#a8a8a8"></div>
<div style="left:1355px;top:211px;width:1px;height:17px;background:#a8a8a8"></div>
<div style="left:1616px;top:211px;width:1px;height:17px;background:#a8a8a8"></div>
<div style="left:1877px;top:211px;width:1px;height:17px;background:#a8a8a8"></div>
<div class="t" style="left:1882px;top:212px;height:17px;line-height:17px;">0x008287DC</div>
<div style="left:1094px;top:244px;width:1044px;height:1px;background:#a8a8a8"></div>
<div style="left:1355px;top:228px;width:1px;height:17px;background:#a8a8a8"></div>
<div style="left:1616px;top:228px;width:1px;height:17px;background:#a8a8a8"></div>
<div style="left:1877px;top:228px;width:1px;height:17px;background:#a8a8a8"></div>
<div class="t" style="left:1882px;top:229px;height:17px;line-height:17px;">0x008287D0</div>
<div style="left:1094px;top:261px;width:1044px;height:1px;background:#a8a8a8"></div>
<div style="left:1355px;top:245px;width:1px;height:17px;background:#a8a8a8"></div>
<div style="left:1616px;top:245px;width:1px;height:17px;background:#a8a8a8"></div>
<div style="left:1877px;top:245px;width:1px;height:17px;background:#a8a8a8"></div>
<div class="t" style="left:1882px;top:246px;height:17px;line-height:17px;">0x008287D4</div>
<div style="left:1094px;top:278px;width:1044px;height:1px;background:#a8a8a8"></div>
<div style="left:1355px;top:262px;width:1px;height:17px;background:#a8a8a8"></div>
<div style="left:1616px;top:262px;width:1px;height:17px;background:#a8a8a8"></div>
<div style="left:1877px;top:262px;width:1px;height:17px;background:#a8a8a8"></div>
<div class="t" style="left:1882px;top:263px;height:17px;line-height:17px;">0x008287D8</div>
<div style="left:1094px;top:295px;width:1044px;height:1px;background:#a8a8a8"></div>
<div style="left:1355px;top:279px;width:1px;height:17px;background:#a8a8a8"></div>
<div style="left:1616px;top:279px;width:1px;height:17px;background:#a8a8a8"></div>
<div style="left:1877px;top:279px;width:1px;height:17px;background:#a8a8a8"></div>
<div class="t" style="left:1882px;top:280px;height:17px;line-height:17px;">0x008287DC</div>
<div style="left:1094px;top:312px;width:1044px;height:1px;background:#a8a8a8"></div>
<div style="left:1355px;top:296px;width:1px;height:17px;background:#a8a8a8"></div>
<div style="left:1616px;top:296px;width:1px;height:17px;background:#a8a8a8"></div>
<div style="left:1877px;top:296px;width:1px;height:17px;background:#a8a8a8"></div>
<div class="t" style="left:1882px;top:297px;height:17px;line-height:17px;">0x008287D0</div>
<div style="left:1094px;top:329px;width:1044px;height:1px;background:#a8a8a8"></div>
<div style="left:1355px;top:313px;width:1px;height:17px;background:#a8a8a8"></div>
<div style="left:1616px;top:313px;width:1px;height:17px;background:#a8a8a8"></div>
<div style="left:1877px;top:313px;width:1px;height:17px;background:#a8a8a8"></div>
<div class="t" style="left:1882px;top:314px;height:17px;line-height:17px;">0x008287D4</div>
<div style="left:1094px;top:346px;width:1044px;height:1px;background:#a8a8a8"></div>
<div style="left:1355px;top:330px;width:1px;height:17px;background:#a8a8a8"></div>
<div style="left:1616px;top:330px;width:1px;height:17px;background:#a8a8a8"></div>
<div style="left:1877px;top:330px;width:1px;height:17px;background:#a8a8a8"></div>
<div class="t" style="left:1882px;top:331px;height:17px;line-height:17px;">0x008287D8</div>
<div style="left:1094px;top:363px;width:1044px;height:1px;background:#a8a8a8"></div>
<div style="left:1355px;top:347px;width:1px;height:17px;background:#a8a8a8"></div>
<div style="left:1616px;top:347px;width:1px;height:17px;background:#a8a8a8"></div>
<div style="left:1877px;top:347px;width:1px;height:17px;background:#a8a8a8"></div>
<div class="t" style="left:1882px;top:348px;height:17px;line-height:17px;">0x008287D8</div>
<div style="left:1094px;top:380px;width:1044px;height:1px;background:#a8a8a8"></div>
<div style="left:1355px;top:364px;width:1px;height:17px;background:#a8a8a8"></div>
<div style="left:1616px;top:364px;width:1px;height:17px;background:#a8a8a8"></div>
<div style="left:1877px;top:364px;width:1px;height:17px;background:#a8a8a8"></div>
<div class="t" style="left:1882px;top:365px;height:17px;line-height:17px;">0x008287DC</div>
<div style="left:1094px;top:397px;width:1044px;height:1px;background:#a8a8a8"></div>
<div style="left:1355px;top:381px;width:1px;height:17px;background:#a8a8a8"></div>
<div style="left:1616px;top:381px;width:1px;height:17px;background:#a8a8a8"></div>
<div style="left:1877px;top:381px;width:1px;height:17px;background:#a8a8a8"></div>
<div class="t" style="left:1882px;top:382px;height:17px;line-height:17px;">0x008287D0</div>
<div style="left:1094px;top:414px;width:1044px;height:1px;background:#a8a8a8"></div>
<div style="left:1355px;top:398px;width:1px;height:17px;background:#a8a8a8"></div>
<div style="left:1616px;top:398px;width:1px;height:17px;background:#a8a8a8"></div>
<div style="left:1877px;top:398px;width:1px;height:17px;background:#a8a8a8"></div>
<div class="t" style="left:1882px;top:399px;height:17px;line-height:17px;">0x008287D4</div>
<div style="left:1094px;top:431px;width:1044px;height:1px;background:#a8a8a8"></div>
<div style="left:1355px;top:415px;width:1px;height:17px;background:#a8a8a8"></div>
<div style="left:1616px;top:415px;width:1px;height:17px;background:#a8a8a8"></div>
<div style="left:1877px;top:415px;width:1px;height:17px;background:#a8a8a8"></div>
<div class="t" style="left:1882px;top:416px;height:17px;line-height:17px;">0x008287D8</div>
<div style="left:1094px;top:448px;width:1044px;height:1px;background:#a8a8a8"></div>
<div style="left:1355px;top:432px;width:1px;height:17px;background:#a8a8a8"></div>
<div style="left:1616px;top:432px;width:1px;height:17px;background:#a8a8a8"></div>
<div style="left:1877px;top:432px;width:1px;height:17px;background:#a8a8a8"></div>
<div class="t" style="left:1882px;top:433px;height:17px;line-height:17px;">0x008287DC</div>
<div style="left:1094px;top:465px;width:1044px;height:1px;background:#a8a8a8"></div>
<div style="left:1355px;top:449px;width:1px;height:17px;background:#a8a8a8"></div>
<div style="left:1616px;top:449px;width:1px;height:17px;background:#a8a8a8"></div>
<div style="left:1877px;top:449px;width:1px;height:17px;background:#a8a8a8"></div>
<div class="t" style="left:1882px;top:450px;height:17px;line-height:17px;">0x008287D0</div>
<div style="left:1094px;top:482px;width:1044px;height:1px;background:#a8a8a8"></div>
<div style="left:1355px;top:466px;width:1px;height:17px;background:#a8a8a8"></div>
<div style="left:1616px;top:466px;width:1px;height:17px;background:#a8a8a8"></div>
<div style="left:1877px;top:466px;width:1px;height:17px;background:#a8a8a8"></div>
<div class="t" style="left:1882px;top:467px;height:17px;line-height:17px;">0x008287D4</div>
<div style="left:1094px;top:499px;width:1044px;height:1px;background:#a8a8a8"></div>
<div style="left:1355px;top:483px;width:1px;height:17px;background:#a8a8a8"></div>
<div style="left:1616px;top:483px;width:1px;height:17px;background:#a8a8a8"></div>
<div style="left:1877px;top:483px;width:1px;height:17px;background:#a8a8a8"></div>
<div class="t" style="left:1882px;top:484px;height:17px;line-height:17px;">0x008287D8</div>
<div style="left:1094px;top:516px;width:1044px;height:1px;background:#a8a8a8"></div>
<div style="left:1355px;top:500px;width:1px;height:17px;background:#a8a8a8"></div>
<div style="left:1616px;top:500px;width:1px;height:17px;background:#a8a8a8"></div>
<div style="left:1877px;top:500px;width:1px;height:17px;background:#a8a8a8"></div>
<div style="left:1094px;top:533px;width:1044px;height:1px;background:#a8a8a8"></div>
<div style="left:1355px;top:517px;width:1px;height:17px;background:#a8a8a8"></div>
<div style="left:1616px;top:517px;width:1px;height:17px;background:#a8a8a8"></div>
<div style="left:1877px;top:517px;width:1px;height:17px;background:#a8a8a8"></div>
<div class="t" style="left:1116px;top:127px;height:17px;font-weight:bold;line-height:17px;color:#1e4a80;font-size:10px">(x)=</div>
<div style="left:1101px;top:147px;width:9px;height:9px;border:1px solid #404040;background:#fff"></div>
<div style="left:1103px;top:151px;width:5px;height:1px;background:#000"></div>
<div style="left:1105px;top:149px;width:1px;height:5px;background:#000"></div>
<div style="left:1101px;top:164px;width:9px;height:9px;border:1px solid #404040;background:#fff"></div>
<div style="left:1103px;top:168px;width:5px;height:1px;background:#000"></div>
<div style="left:1105px;top:166px;width:1px;height:5px;background:#000"></div>
<div style="left:1101px;top:181px;width:9px;height:9px;border:1px solid #404040;background:#fff"></div>
<div style="left:1103px;top:185px;width:5px;height:1px;background:#000"></div>
<div style="left:1119px;top:147px;width:10px;height:10px"><svg width="10" height="10" viewBox="0 0 10 10"><path d="M0 3 L4 3 L4 0 L9 4.5 L4 9 L4 6 L0 6Z" fill="#1e3a6a"/></svg></div>
<div style="left:1119px;top:164px;width:10px;height:10px"><svg width="10" height="10" viewBox="0 0 10 10"><path d="M0 3 L4 3 L4 0 L9 4.5 L4 9 L4 6 L0 6Z" fill="#1e3a6a"/></svg></div>
<div style="left:1116px;top:178px;width:16px;height:16px"><svg width="16" height="16" viewBox="0 0 16 16"><path d="M1 6 L6 6 L7 4 L14 4 L14 14 L1 14Z" fill="#f0c060" stroke="#b07020"/><ellipse cx="10" cy="5" rx="4" ry="3.5" fill="#3070b0"/></svg></div>
<div class="t" style="left:1134px;top:195px;height:17px;font-weight:bold;line-height:17px;color:#1e4a80;font-size:10px">(x)=</div>
<div class="pb" style="left:1500px;top:539px;width:641px;height:616px;"></div>
<div style="left:1946px;top:542px;width:16px;height:16px"><svg width="16" height="16" viewBox="0 0 16 16"><rect x="3" y="4" width="10" height="9" fill="#c8d8e8" stroke="#6080b0"/><path d="M5 9 L11 9" stroke="#2050a0" stroke-width="1.5"/></svg></div>
<div style="left:1968px;top:544px;width:2px;height:18px;border-left:1px solid #505050;border-right:1px solid #b0b0b0"></div>
<div style="left:1976px;top:542px;width:16px;height:16px"><svg width="16" height="16" viewBox="0 0 16 16"><path d="M4 2 L4 12 L1 9 M4 12 L7 9 M11 14 L11 4 L8 7 M11 4 L14 7" stroke="#e8a010" stroke-width="2" fill="none"/></svg></div>
<div style="left:1999px;top:544px;width:2px;height:18px;border-left:1px solid #505050;border-right:1px solid #b0b0b0"></div>
<div style="left:2007px;top:542px;width:16px;height:16px"><svg width="16" height="16" viewBox="0 0 16 16"><rect x="1.5" y="3.5" width="11" height="10" fill="#e4f0fb" stroke="#c9a84a"/><rect x="1.5" y="3.5" width="11" height="2" fill="#4a8ad0"/><path d="M12 1 L12 7 M9 4 L15 4" stroke="#d4a020" stroke-width="1.6"/></svg></div>
<div style="left:2031px;top:542px;width:16px;height:16px"><svg width="16" height="16" viewBox="0 0 16 16"><rect x="2" y="5" width="11" height="9" fill="#e4f0fb" stroke="#4a8ad0"/><path d="M8 10 L14 3" stroke="#606060" stroke-width="1.5"/></svg></div>
<div style="left:2055px;top:544px;width:2px;height:18px;border-left:1px solid #505050;border-right:1px solid #b0b0b0"></div>
<div style="left:2062px;top:542px;width:16px;height:16px"><svg width="16" height="16" viewBox="0 0 16 16"><path d="M3 8 C3 3 11 2 13 6 M13 9 C13 14 5 14 3 10" stroke="#e8b020" stroke-width="2" fill="none"/></svg></div>
<div style="left:2088px;top:542px;width:10px;height:6px"><svg width="10" height="6"><path d="M1 1 L9 1 L5 5Z" fill="#fff" stroke="#303030" stroke-width="1.3" stroke-linejoin="round"/></svg></div>
<div style="left:2107px;top:542px;width:10px;height:5px"><svg width="10" height="5"><rect x="0.8" y="0.8" width="8.4" height="3" rx="1" fill="#fff" stroke="#303030" stroke-width="1.5"/></svg></div>
<div style="left:2125px;top:542px;width:10px;height:10px"><svg width="10" height="10"><rect x="0.8" y="0.8" width="8.4" height="8.4" rx="1" fill="#fff" stroke="#303030" stroke-width="1.5"/><rect x="1" y="2.6" width="8" height="1.4" fill="#303030"/></svg></div>
<div class="hdr" style="left:1501px;top:564px;width:621px;height:17px;"></div>
<div class="hdr" style="left:1953px;top:564px;width:169px;height:17px;"></div>
<div class="t" style="left:1958px;top:565px;height:17px;line-height:17px;">Value</div>
<div class="wh" style="left:1501px;top:581px;width:621px;height:554px;"></div>
<div style="left:1501px;top:597px;width:621px;height:1px;background:#a8a8a8"></div>
<div style="left:1501px;top:614px;width:621px;height:1px;background:#a8a8a8"></div>
<div style="left:1501px;top:631px;width:621px;height:1px;background:#a8a8a8"></div>
<div class="t" style="left:1958px;top:616px;height:17px;line-height:17px;">0x00000000</div>
<div style="left:1501px;top:648px;width:621px;height:1px;background:#a8a8a8"></div>
<div class="t" style="left:1958px;top:633px;height:17px;line-height:17px;">0x44010100</div>
<div style="left:1501px;top:665px;width:621px;height:1px;background:#a8a8a8"></div>
<div class="t" style="left:1958px;top:650px;height:17px;line-height:17px;">0x0700001D</div>
<div style="left:1501px;top:682px;width:621px;height:1px;background:#a8a8a8"></div>
<div class="t" style="left:1958px;top:667px;height:17px;line-height:17px;">0x00000000</div>
<div style="left:1501px;top:699px;width:621px;height:1px;background:#a8a8a8"></div>
<div class="t" style="left:1958px;top:684px;height:17px;line-height:17px;">0x00000783</div>
<div style="left:1501px;top:716px;width:621px;height:1px;background:#a8a8a8"></div>
<div class="t" style="left:1958px;top:701px;height:17px;line-height:17px;">0x00000000</div>
<div style="left:1501px;top:733px;width:621px;height:1px;background:#a8a8a8"></div>
<div class="t" style="left:1958px;top:718px;height:17px;line-height:17px;">0x00000000</div>
<div style="left:1501px;top:750px;width:621px;height:1px;background:#a8a8a8"></div>
<div class="t" style="left:1958px;top:735px;height:17px;line-height:17px;">0x00000000</div>
<div style="left:1501px;top:767px;width:621px;height:1px;background:#a8a8a8"></div>
<div class="t" style="left:1958px;top:752px;height:17px;line-height:17px;">0x00829000</div>
<div style="left:1501px;top:784px;width:621px;height:1px;background:#a8a8a8"></div>
<div class="t" style="left:1958px;top:769px;height:17px;line-height:17px;">0x00000000</div>
<div style="left:1501px;top:801px;width:621px;height:1px;background:#a8a8a8"></div>
<div class="t" style="left:1958px;top:786px;height:17px;line-height:17px;">0x81555D8E</div>
<div style="left:1501px;top:818px;width:621px;height:1px;background:#a8a8a8"></div>
<div class="t" style="left:1958px;top:803px;height:17px;line-height:17px;">0x00000000</div>
<div style="left:1501px;top:835px;width:621px;height:1px;background:#a8a8a8"></div>
<div class="t" style="left:1958px;top:820px;height:17px;line-height:17px;">0x00000000</div>
<div style="left:1501px;top:852px;width:621px;height:1px;background:#a8a8a8"></div>
<div class="t" style="left:1958px;top:837px;height:17px;line-height:17px;">0x00000000</div>
<div style="left:1501px;top:869px;width:621px;height:1px;background:#a8a8a8"></div>
<div class="t" style="left:1958px;top:854px;height:17px;line-height:17px;">0x00000000</div>
<div style="left:1501px;top:886px;width:621px;height:1px;background:#a8a8a8"></div>
<div class="t" style="left:1958px;top:871px;height:17px;line-height:17px;">0x00000000</div>
<div style="left:1501px;top:903px;width:621px;height:1px;background:#a8a8a8"></div>
<div class="t" style="left:1958px;top:888px;height:17px;line-height:17px;">0x00000000</div>
<div style="left:1501px;top:920px;width:621px;height:1px;background:#a8a8a8"></div>
<div class="t" style="left:1958px;top:905px;height:17px;line-height:17px;">0x00000000</div>
<div style="left:1501px;top:937px;width:621px;height:1px;background:#a8a8a8"></div>
<div class="t" style="left:1958px;top:922px;height:17px;line-height:17px;">0x00000000</div>
<div style="left:1501px;top:954px;width:621px;height:1px;background:#a8a8a8"></div>
<div class="t" style="left:1958px;top:939px;height:17px;line-height:17px;">0x00000000</div>
<div style="left:1501px;top:971px;width:621px;height:1px;background:#a8a8a8"></div>
<div class="t" style="left:1958px;top:956px;height:17px;line-height:17px;color:#e01020">Error: unable to read</div>
<div style="left:1501px;top:988px;width:621px;height:1px;background:#a8a8a8"></div>
<div class="t" style="left:1958px;top:973px;height:17px;line-height:17px;">0x00000000</div>
<div style="left:1501px;top:1005px;width:621px;height:1px;background:#a8a8a8"></div>
<div class="t" style="left:1958px;top:990px;height:17px;line-height:17px;">0x00000000</div>
<div style="left:1501px;top:1022px;width:621px;height:1px;background:#a8a8a8"></div>
<div class="t" style="left:1958px;top:1007px;height:17px;line-height:17px;">0x00000000</div>
<div style="left:1501px;top:1039px;width:621px;height:1px;background:#a8a8a8"></div>
<div class="t" style="left:1958px;top:1024px;height:17px;line-height:17px;">0x0166464B</div>
<div style="left:1501px;top:1056px;width:621px;height:1px;background:#a8a8a8"></div>
<div class="t" style="left:1958px;top:1041px;height:17px;line-height:17px;">0x0000000C</div>
<div style="left:1501px;top:1073px;width:621px;height:1px;background:#a8a8a8"></div>
<div class="t" style="left:1958px;top:1058px;height:17px;line-height:17px;">0x00000000</div>
<div style="left:1501px;top:1090px;width:621px;height:1px;background:#a8a8a8"></div>
<div class="t" style="left:1958px;top:1075px;height:17px;line-height:17px;">0x00000000</div>
<div style="left:1501px;top:1107px;width:621px;height:1px;background:#a8a8a8"></div>
<div class="t" style="left:1958px;top:1092px;height:17px;line-height:17px;">0x00000000</div>
<div style="left:1501px;top:1124px;width:621px;height:1px;background:#a8a8a8"></div>
<div class="t" style="left:1958px;top:1126px;height:17px;line-height:17px;">0x0000000100000000</div>
<div style="left:1953px;top:581px;width:1px;height:554px;background:#a8a8a8"></div>
<div style="left:1501px;top:1135px;width:621px;height:0px;"></div>
<div class="trough" style="left:2122px;top:564px;width:16px;height:571px;"></div>
<div class="b3" style="left:2122px;top:564px;width:16px;height:16px;"></div>
<div style="left:2126px;top:569px;width:8px;height:5px"><svg width="8" height="5"><path d="M0 4.5 L4 0.5 L8 4.5Z" fill="#000"/></svg></div>
<div class="b3" style="left:2122px;top:1119px;width:16px;height:16px;"></div>
<div style="left:2126px;top:1125px;width:8px;height:5px"><svg width="8" height="5"><path d="M0 0.5 L4 4.5 L8 0.5Z" fill="#000"/></svg></div>
<div class="b3" style="left:2122px;top:582px;width:16px;height:266px;"></div>
<div class="trough" style="left:1502px;top:1135px;width:620px;height:16px;"></div>
<div class="b3" style="left:1502px;top:1135px;width:16px;height:16px;"></div>
<div style="left:1507px;top:1139px;width:5px;height:8px"><svg width="5" height="8"><path d="M4.5 0 L0.5 4 L4.5 8Z" fill="#000"/></svg></div>
<div class="b3" style="left:2106px;top:1135px;width:16px;height:16px;"></div>
<div style="left:2112px;top:1139px;width:5px;height:8px"><svg width="5" height="8"><path d="M0.5 0 L4.5 4 L0.5 8Z" fill="#000"/></svg></div>
<div class="b3" style="left:1518px;top:1135px;width:380px;height:16px;"></div>
<div style="left:2122px;top:1135px;width:16px;height:16px;background:#808080"></div>
<div style="left:225px;top:1186px;width:1920px;height:2px;background:#a8a8a8"></div>
<div style="left:1935px;top:204px;width:5px;height:1175px;background:#000"></div>
<div style="left:1939px;top:204px;width:34px;height:1175px;background:linear-gradient(to right,rgba(0,0,0,0.6),rgba(0,0,0,0.3) 35%,rgba(0,0,0,0.08) 70%,rgba(0,0,0,0))"></div>
<div style="left:1935px;top:1226px;width:4px;height:27px;background:#a0a0a0"></div>
<div style="left:2145px;top:1034px;width:4px;height:27px;background:#a0a0a0"></div>
<div class="win" style="left:15px;top:204px;width:1920px;height:1175px;"></div>
<div style="left:15px;top:1377px;width:1920px;height:2px;background:#a8a8a8"></div>
<div style="left:15px;top:204px;width:1920px;height:18px;background:linear-gradient(to right,#0a246a,#a6caf0)"></div>
<div style="left:18px;top:205px;width:16px;height:16px"><svg width="16" height="16" viewBox="0 0 16 16"><path d="M8 1 L15 4.5 L15 11.5 L8 15 L1 11.5 L1 4.5Z" fill="#e8e8e8" stroke="#999" stroke-width="0.6"/><path d="M1 4.5 L8 8 L15 4.5 M8 8 L8 15" stroke="#888" stroke-width="0.8" fill="none"/><circle cx="8" cy="4.2" r="1.3" fill="#333"/><circle cx="4.5" cy="10" r="1.2" fill="#333"/><circle cx="11.5" cy="10" r="1.2" fill="#333"/></svg></div>
<div class="t" style="left:34px;top:204px;height:18px;line-height:18px;color:#fff;letter-spacing:-0.13px">CCS Edit - SRIO_TputBenchmarkingTestProject/srio_dio_tput.c - Code Composer Studio</div>
<div style="left:1847px;top:206px;width:16px;height:14px;background:#808080;border-top:1px solid #c8c8c8;border-left:1px solid #c8c8c8;border-right:1px solid #303030;border-bottom:1px solid #303030"></div>
<div style="left:1850px;top:208px;width:10px;height:10px"><svg width="10" height="10"><path d="M0.5 5 L3.5 2 L3.5 8Z M9.5 5 L6.5 2 L6.5 8Z" fill="#000"/><rect x="4.5" y="1" width="1" height="8" fill="#000"/></svg></div>
<div style="left:1863px;top:206px;width:16px;height:14px;background:#808080;border-top:1px solid #c8c8c8;border-left:1px solid #c8c8c8;border-right:1px solid #303030;border-bottom:1px solid #303030"></div>
<div style="left:1866px;top:207px;width:11px;height:11px"><svg width="11" height="11"><rect x="1" y="1.5" width="8" height="8" fill="none" stroke="#000"/><path d="M4 5.5 L10 5.5 M7.5 3.5 L10 5.5 L7.5 7.5" stroke="#000" fill="none" stroke-width="1.2"/></svg></div>
<div style="left:1883px;top:206px;width:16px;height:14px;background:#808080;border-top:1px solid #c8c8c8;border-left:1px solid #c8c8c8;border-right:1px solid #303030;border-bottom:1px solid #303030"></div>
<div style="left:1887px;top:215px;width:6px;height:2px;background:#000"></div>
<div style="left:1899px;top:206px;width:16px;height:14px;background:#808080;border-top:1px solid #c8c8c8;border-left:1px solid #c8c8c8;border-right:1px solid #303030;border-bottom:1px solid #303030"></div>
<div style="left:1902px;top:208px;width:10px;height:10px"><svg width="10" height="10"><rect x="3" y="1" width="6" height="5" fill="none" stroke="#000" stroke-width="1"/><rect x="3" y="1" width="6" height="1.5" fill="#000"/><rect x="1" y="4" width="6" height="5" fill="#808080" stroke="#000" stroke-width="1"/><rect x="1" y="4" width="6" height="1.5" fill="#000"/></svg></div>
<div style="left:1916px;top:206px;width:17px;height:14px;background:#808080;border-top:1px solid #c8c8c8;border-left:1px solid #c8c8c8;border-right:1px solid #303030;border-bottom:1px solid #303030"></div>
<div style="left:1919px;top:208px;width:10px;height:10px"><svg width="10" height="10"><path d="M1.5 1.5 L8.5 8.5 M8.5 1.5 L1.5 8.5" stroke="#000" stroke-width="1.8"/></svg></div>
<div class="t" style="left:20px;top:222px;height:20px;line-height:20px"><u>F</u>ile</div>
<div class="t" style="left:48px;top:222px;height:20px;line-height:20px"><u>E</u>dit</div>
<div class="t" style="left:79px;top:222px;height:20px;line-height:20px"><u>V</u>iew</div>
<div class="t" style="left:112px;top:222px;height:20px;line-height:20px"><u>N</u>avigate</div>
<div class="t" style="left:167px;top:222px;height:20px;line-height:20px"><u>P</u>roject</div>
<div class="t" style="left:213px;top:222px;height:20px;line-height:20px"><u>R</u>un</div>
<div class="t" style="left:244px;top:222px;height:20px;line-height:20px;">Scripts</div>
<div class="t" style="left:288px;top:222px;height:20px;line-height:20px"><u>W</u>indow</div>
<div class="t" style="left:338px;top:222px;height:20px;line-height:20px"><u>H</u>elp</div>
<div style="left:19px;top:250px;width:3px;height:18px;border-left:1px solid #b0b0b0;border-right:1px solid #505050;border-top:1px solid #b0b0b0;border-bottom:1px solid #505050"></div>
<div style="left:30px;top:251px;width:16px;height:16px"><svg width="16" height="16" viewBox="0 0 16 16"><rect x="1.5" y="3.5" width="11" height="10" fill="#e4f0fb" stroke="#c9a84a"/><rect x="1.5" y="3.5" width="11" height="2" fill="#4a8ad0"/><path d="M12 1 L12 7 M9 4 L15 4" stroke="#d4a020" stroke-width="1.6"/></svg></div>
<div style="left:53px;top:257px;width:7px;height:4px"><svg width="7" height="4"><path d="M0 0 L7 0 L3.5 4Z" fill="#000"/></svg></div>
<div style="left:65px;top:251px;width:16px;height:16px"><svg width="16" height="16" viewBox="0 0 16 16"><rect x="2" y="2" width="12" height="12" fill="#d8d8d8" stroke="#a8a8a8"/><rect x="4" y="2" width="8" height="5" fill="#f0f0f0"/><rect x="5" y="10" width="6" height="4" fill="#b0b0b0"/></svg></div>
<div style="left:90px;top:251px;width:16px;height:16px"><svg width="16" height="16" viewBox="0 0 16 16"><rect x="1" y="1" width="10" height="10" fill="#d0d0d0" stroke="#a0a0a0"/><rect x="5" y="5" width="10" height="10" fill="#d8d8d8" stroke="#a8a8a8"/><rect x="7" y="11" width="6" height="4" fill="#b0b0b0"/></svg></div>
<div style="left:116px;top:250px;width:3px;height:18px;border-left:1px solid #b0b0b0;border-right:1px solid #505050;border-top:1px solid #b0b0b0;border-bottom:1px solid #505050"></div>
<div style="left:126px;top:251px;width:16px;height:16px"><svg width="16" height="16" viewBox="0 0 16 16"><path d="M2 5 L8 1 L10 3 L4 8Z" fill="#606060" stroke="#303030"/><path d="M6 6 L13 14" stroke="#a05020" stroke-width="2.5"/></svg></div>
<div style="left:151px;top:257px;width:7px;height:4px"><svg width="7" height="4"><path d="M0 0 L7 0 L3.5 4Z" fill="#000"/></svg></div>
<div style="left:166px;top:250px;width:3px;height:18px;border-left:1px solid #b0b0b0;border-right:1px solid #505050;border-top:1px solid #b0b0b0;border-bottom:1px solid #505050"></div>
<div style="left:176px;top:251px;width:16px;height:16px"><svg width="16" height="16" viewBox="0 0 16 16"><ellipse cx="8" cy="9" rx="4" ry="5" fill="#8cc080" stroke="#2c6050"/><path d="M2 4 L5 6 M14 4 L11 6 M1 9 L4 9 M15 9 L12 9 M2 14 L5 12 M14 14 L11 12 M6 3 L5 1 M10 3 L11 1" stroke="#2c6050" stroke-width="1"/></svg></div>
<div style="left:200px;top:257px;width:7px;height:4px"><svg width="7" height="4"><path d="M0 0 L7 0 L3.5 4Z" fill="#000"/></svg></div>
<div style="left:216px;top:250px;width:3px;height:18px;border-left:1px solid #b0b0b0;border-right:1px solid #505050;border-top:1px solid #b0b0b0;border-bottom:1px solid #505050"></div>
<div style="left:226px;top:251px;width:16px;height:16px"><svg width="16" height="16" viewBox="0 0 16 16"><path d="M3 14 L6 9 L9 12 Z" fill="#f8e8a0" stroke="#c08020"/><path d="M7 10 L13 3 L15 5 L9 12Z" fill="#e0b040" stroke="#a07010"/></svg></div>
<div style="left:251px;top:257px;width:7px;height:4px"><svg width="7" height="4"><path d="M0 0 L7 0 L3.5 4Z" fill="#000"/></svg></div>
<div style="left:266px;top:250px;width:3px;height:18px;border-left:1px solid #b0b0b0;border-right:1px solid #505050;border-top:1px solid #b0b0b0;border-bottom:1px solid #505050"></div>
<div style="left:277px;top:251px;width:16px;height:16px"><svg width="16" height="16" viewBox="0 0 16 16"><rect x="2" y="2" width="12" height="12" fill="#e8f0fa" stroke="#4a7ab8"/><path d="M5 5 L11 5 M5 8 L11 8 M5 11 L11 11" stroke="#4a7ab8"/></svg></div>
<div style="left:303px;top:250px;width:3px;height:18px;border-left:1px solid #b0b0b0;border-right:1px solid #505050;border-top:1px solid #b0b0b0;border-bottom:1px solid #505050"></div>
<div style="left:312px;top:251px;width:16px;height:16px"><svg width="16" height="16" viewBox="0 0 16 16"><path d="M1 8 L7 3 L7 6 L15 6 L15 10 L7 10 L7 13Z" fill="#e0e0e0" stroke="#b0b0b0"/></svg></div>
<div style="left:337px;top:251px;width:16px;height:16px"><svg width="16" height="16" viewBox="0 0 16 16"><path d="M1 8 L7 3 L7 6 L15 6 L15 10 L7 10 L7 13Z" fill="#f8c040" stroke="#c08010"/></svg></div>
<div style="left:361px;top:257px;width:7px;height:4px"><svg width="7" height="4"><path d="M0 0 L7 0 L3.5 4Z" fill="#000"/></svg></div>
<div style="left:375px;top:251px;width:16px;height:16px"><svg width="16" height="16" viewBox="0 0 16 16"><path d="M15 8 L9 3 L9 6 L1 6 L1 10 L9 10 L9 13Z" fill="#f0f0f0" stroke="#b8b8b8"/></svg></div>
<div style="left:398px;top:258px;width:7px;height:4px"><svg width="7" height="4"><path d="M0 0 L7 0 L3.5 4Z" fill="#000"/></svg></div>
<div style="left:1440px;top:272px;width:195px;height:1px;background:linear-gradient(to right,rgba(184,184,184,0),#b8b8b8)"></div>
<div style="left:1634px;top:244px;width:267px;height:30px"><svg width="267" height="30"><path d="M0 28.5 L1.5 28.5 Q5.5 28.5 5.5 24.5 L5.5 4.5 Q5.5 0.5 9.5 0.5 L266 0.5" fill="none" stroke="#b8b8b8" stroke-width="1"/></svg></div>
<div style="left:1647px;top:252px;width:16px;height:16px"><svg width="16" height="16" viewBox="0 0 16 16"><rect x="2.5" y="3.5" width="11" height="10" fill="#eef4fa" stroke="#b09050"/><rect x="2.5" y="3.5" width="11" height="2" fill="#4a80c8"/><path d="M2.5 9 L13.5 9 M7 5.5 L7 13.5" stroke="#b09050"/><path d="M12 0.5 L12 6.5 M9 3.5 L15 3.5" stroke="#e0b020" stroke-width="1.6"/></svg></div>
<div style="left:1667px;top:248px;width:72px;height:22px;background-color:#808080;background-image:linear-gradient(45deg,#a8a8a8 25%,transparent 25%,transparent 75%,#a8a8a8 75%),linear-gradient(45deg,#a8a8a8 25%,transparent 25%,transparent 75%,#a8a8a8 75%);background-size:2px 2px;background-position:0 0,1px 1px;border-top:1px solid #505050;border-left:1px solid #505050;border-bottom:1px solid #b8b8b8;border-right:1px solid #b8b8b8"></div>
<div style="left:1671px;top:251px;width:16px;height:16px"><svg width="16" height="16" viewBox="0 0 16 16"><rect x="1.5" y="1.5" width="11" height="12" fill="#eef4fa" stroke="#909090"/><rect x="1.5" y="1.5" width="11" height="2" fill="#4a80c8"/><path d="M1.5 7 L12.5 7 M5 3.5 L5 13.5" stroke="#909090"/><path d="M7 11 C7 9 14 9 14 11 L10.5 15.5Z" fill="#e0e0e0" stroke="#707070" stroke-width="0.8"/></svg></div>
<div class="t" style="left:1691px;top:249px;height:20px;line-height:20px;">CCS Edit</div>
<div style="left:1905px;top:246px;width:3px;height:18px;border-left:1px solid #b8b8b8;border-right:1px solid #505050;border-radius:1px"></div>
<div class="pb" style="left:19px;top:275px;width:322px;height:592px;"></div>
<div class="tabg" style="left:20px;top:276px;width:83px;height:25px"></div>
<div style="left:25px;top:279px;width:16px;height:16px"><svg width="16" height="16" viewBox="0 0 16 16"><rect x="1.5" y="1.5" width="5" height="5" fill="#cde6fa" stroke="#1e6ab0"/><rect x="1.5" y="9.5" width="5" height="5" fill="#cde6fa" stroke="#1e6ab0"/><path d="M8 3.5 L14 3.5 M8 12.5 L14 12.5" stroke="#1e6ab0" stroke-width="1.3"/><rect x="8" y="7" width="2" height="2" fill="none" stroke="#1e6ab0"/></svg></div>
<div class="t" style="left:43px;top:278px;height:20px;line-height:20px;">Outline</div>
<div style="left:85px;top:282px;width:10px;height:10px"><svg width="10" height="10"><path d="M0.5 0.5 L3.5 0.5 L5 2 L6.5 0.5 L9.5 0.5 L9.5 3.5 L8 5 L9.5 6.5 L9.5 9.5 L6.5 9.5 L5 8 L3.5 9.5 L0.5 9.5 L0.5 6.5 L2 5 L0.5 3.5Z" fill="#fff" stroke="#303030" stroke-width="1.1"/></svg></div>
<div style="left:144px;top:281px;width:16px;height:16px"><svg width="16" height="16" viewBox="0 0 16 16"><rect x="2" y="2" width="10" height="9" fill="#c8d8e8" stroke="#6080b0"/><rect x="4" y="5" width="10" height="9" fill="#dce8f4" stroke="#6080b0"/><path d="M6 10 L12 10" stroke="#2050a0" stroke-width="1.5"/></svg></div>
<div style="left:168px;top:280px;width:16px;height:16px"><svg width="16" height="16" viewBox="0 0 16 16"><text x="6" y="8" font-size="9" fill="#20a0a0" font-family="Liberation Sans">a</text><text x="7" y="16" font-size="9" fill="#b020b0" font-family="Liberation Sans">z</text><path d="M3 2 L3 14" stroke="#6080a0"/></svg></div>
<div style="left:192px;top:280px;width:16px;height:16px"><svg width="16" height="16" viewBox="0 0 16 16"><circle cx="8" cy="8" r="5" fill="#60a8e0"/><path d="M2 2 L14 14" stroke="#1e3a80" stroke-width="1.5"/></svg></div>
<div style="left:215px;top:280px;width:16px;height:16px"><svg width="16" height="16" viewBox="0 0 16 16"><path d="M2 14 L13 3" stroke="#1e3a80" stroke-width="1.5"/><text x="9" y="8" font-size="8" fill="#d02020" font-family="Liberation Sans">S</text></svg></div>
<div style="left:239px;top:281px;width:16px;height:16px"><svg width="16" height="16" viewBox="0 0 16 16"><circle cx="8" cy="8" r="3.5" fill="#40b060" stroke="#208040"/></svg></div>
<div style="left:262px;top:280px;width:16px;height:16px"><svg width="16" height="16" viewBox="0 0 16 16"><path d="M5 2 L4 14 M11 2 L10 14 M1 5 L15 5 M1 11 L15 11" stroke="#000" stroke-width="1.8"/><path d="M2 2 L14 14" stroke="#404040"/></svg></div>
<div style="left:288px;top:281px;width:10px;height:6px"><svg width="10" height="6"><path d="M1 1 L9 1 L5 5Z" fill="#fff" stroke="#303030" stroke-width="1.3" stroke-linejoin="round"/></svg></div>
<div style="left:307px;top:281px;width:10px;height:5px"><svg width="10" height="5"><rect x="0.8" y="0.8" width="8.4" height="3" rx="1" fill="#fff" stroke="#303030" stroke-width="1.5"/></svg></div>
<div style="left:325px;top:281px;width:10px;height:10px"><svg width="10" height="10"><rect x="0.8" y="0.8" width="8.4" height="8.4" rx="1" fill="#fff" stroke="#303030" stroke-width="1.5"/><rect x="1" y="2.6" width="8" height="1.4" fill="#303030"/></svg></div>
<div style="left:20px;top:300px;width:320px;height:565px;background:#808080"></div>
<div class="wh" style="left:22px;top:301px;width:300px;height:547px;"></div>
<div style="left:22px;top:301px;width:300px;height:547px;overflow:hidden">
<div style="left:14px;top:8px;width:1px;height:540px;border-left:1px dotted #606060"></div>
<div style="left:15px;top:8px;width:12px;height:1px;border-top:1px dotted #606060"></div>
<div style="left:31px;top:3px;width:12px;height:10px"><svg width="12" height="10" viewBox="0 0 12 10"><rect x="0" y="0" width="5" height="5" fill="#2a6ab0"/><path d="M7 0 L11 0 L11 10 L1 10 L1 6 L7 6Z" fill="#3a80c0"/></svg></div>
<div class="t" style="left:54px;top:1px;height:17px;line-height:17px;">xdc/runtime/System.h</div>
<div style="left:15px;top:25px;width:12px;height:1px;border-top:1px dotted #606060"></div>
<div style="left:31px;top:20px;width:12px;height:10px"><svg width="12" height="10" viewBox="0 0 12 10"><rect x="0" y="0" width="5" height="5" fill="#2a6ab0"/><path d="M7 0 L11 0 L11 10 L1 10 L1 6 L7 6Z" fill="#3a80c0"/></svg></div>
<div class="t" style="left:54px;top:18px;height:17px;line-height:17px;">xdc/runtime/Memory.h</div>
<div style="left:15px;top:42px;width:12px;height:1px;border-top:1px dotted #606060"></div>
<div style="left:31px;top:37px;width:12px;height:10px"><svg width="12" height="10" viewBox="0 0 12 10"><rect x="0" y="0" width="5" height="5" fill="#2a6ab0"/><path d="M7 0 L11 0 L11 10 L1 10 L1 6 L7 6Z" fill="#3a80c0"/></svg></div>
<div class="t" style="left:54px;top:35px;height:17px;line-height:17px;">ti/csl/csl_chip.h</div>
<div style="left:15px;top:59px;width:12px;height:1px;border-top:1px dotted #606060"></div>
<div style="left:31px;top:54px;width:12px;height:10px"><svg width="12" height="10" viewBox="0 0 12 10"><rect x="0" y="0" width="5" height="5" fill="#2a6ab0"/><path d="M7 0 L11 0 L11 10 L1 10 L1 6 L7 6Z" fill="#3a80c0"/></svg></div>
<div class="t" style="left:54px;top:52px;height:17px;line-height:17px;">ti/drv/srio/srio_drv.h</div>
<div style="left:15px;top:76px;width:12px;height:1px;border-top:1px dotted #606060"></div>
<div style="left:31px;top:71px;width:12px;height:10px"><svg width="12" height="10" viewBox="0 0 12 10"><rect x="0" y="0" width="5" height="5" fill="#2a6ab0"/><path d="M7 0 L11 0 L11 10 L1 10 L1 6 L7 6Z" fill="#3a80c0"/></svg></div>
<div class="t" style="left:54px;top:69px;height:17px;line-height:17px;">srio_tput.h</div>
<div style="left:15px;top:93px;width:12px;height:1px;border-top:1px dotted #606060"></div>
<div style="left:31px;top:88px;width:12px;height:10px"><svg width="12" height="10" viewBox="0 0 12 10"><rect x="0" y="0" width="5" height="5" fill="#2a6ab0"/><path d="M7 0 L11 0 L11 10 L1 10 L1 6 L7 6Z" fill="#3a80c0"/></svg></div>
<div class="t" style="left:54px;top:86px;height:17px;line-height:17px;">benchmarking.h</div>
<div style="left:15px;top:110px;width:12px;height:1px;border-top:1px dotted #606060"></div>
<div style="left:31px;top:105px;width:12px;height:10px"><svg width="12" height="10" viewBox="0 0 12 10"><rect x="0" y="0" width="5" height="5" fill="#2a6ab0"/><path d="M7 0 L11 0 L11 10 L1 10 L1 6 L7 6Z" fill="#3a80c0"/></svg></div>
<div class="t" style="left:54px;top:103px;height:17px;line-height:17px;">ti/csl/csl_tsc.h</div>
<div style="left:15px;top:127px;width:12px;height:1px;border-top:1px dotted #606060"></div>
<div style="left:31px;top:122px;width:11px;height:11px"><svg width="11" height="11" viewBox="0 0 11 11"><path d="M4.2 0.5 L2.6 10.5 M8.4 0.5 L6.8 10.5 M0.5 3.6 L10 3.6 M0 7.4 L9.5 7.4" stroke="#2a5a9a" stroke-width="1.9"/></svg></div>
<div class="t" style="left:54px;top:120px;height:17px;line-height:17px;letter-spacing:-0.6px">MAX_DIO_PACING_DELAY_CYCLES</div>
<div style="left:15px;top:144px;width:12px;height:1px;border-top:1px dotted #606060"></div>
<div style="left:31px;top:139px;width:11px;height:11px"><svg width="11" height="11" viewBox="0 0 11 11"><path d="M4.2 0.5 L2.6 10.5 M8.4 0.5 L6.8 10.5 M0.5 3.6 L10 3.6 M0 7.4 L9.5 7.4" stroke="#2a5a9a" stroke-width="1.9"/></svg></div>
<div class="t" style="left:54px;top:137px;height:17px;line-height:17px;letter-spacing:-0.6px">MAX_DIO_NREAD_TX_BUFFERS</div>
<div style="left:15px;top:161px;width:12px;height:1px;border-top:1px dotted #606060"></div>
<div style="left:31px;top:156px;width:11px;height:11px"><svg width="11" height="11" viewBox="0 0 11 11"><path d="M4.2 0.5 L2.6 10.5 M8.4 0.5 L6.8 10.5 M0.5 3.6 L10 3.6 M0 7.4 L9.5 7.4" stroke="#2a5a9a" stroke-width="1.9"/></svg></div>
<div class="t" style="left:54px;top:154px;height:17px;line-height:17px;letter-spacing:-0.6px">MAX_DIO_TX_BUFFERS</div>
<div style="left:15px;top:178px;width:12px;height:1px;border-top:1px dotted #606060"></div>
<div style="left:31px;top:173px;width:11px;height:11px"><svg width="11" height="11" viewBox="0 0 11 11"><path d="M4.2 0.5 L2.6 10.5 M8.4 0.5 L6.8 10.5 M0.5 3.6 L10 3.6 M0 7.4 L9.5 7.4" stroke="#2a5a9a" stroke-width="1.9"/></svg></div>
<div class="t" style="left:54px;top:171px;height:17px;line-height:17px;letter-spacing:-0.6px">MAX_DIO_RX_BUFFERS</div>
<div style="left:15px;top:195px;width:12px;height:1px;border-top:1px dotted #606060"></div>
<div style="left:31px;top:190px;width:11px;height:11px"><svg width="11" height="11" viewBox="0 0 11 11"><path d="M4.2 0.5 L2.6 10.5 M8.4 0.5 L6.8 10.5 M0.5 3.6 L10 3.6 M0 7.4 L9.5 7.4" stroke="#2a5a9a" stroke-width="1.9"/></svg></div>
<div class="t" style="left:54px;top:188px;height:17px;line-height:17px;letter-spacing:-0.6px">DIO_ERROR_PACKET_SIZE_BYTES</div>
<div style="left:15px;top:212px;width:12px;height:1px;border-top:1px dotted #606060"></div>
<div style="left:31px;top:207px;width:11px;height:11px"><svg width="11" height="11" viewBox="0 0 11 11"><path d="M4.2 0.5 L2.6 10.5 M8.4 0.5 L6.8 10.5 M0.5 3.6 L10 3.6 M0 7.4 L9.5 7.4" stroke="#2a5a9a" stroke-width="1.9"/></svg></div>
<div class="t" style="left:54px;top:205px;height:17px;line-height:17px;letter-spacing:-0.6px">PRODUCER_START_DELAY_CYCLES</div>
<div style="left:15px;top:229px;width:12px;height:1px;border-top:1px dotted #606060"></div>
<div style="left:31px;top:223px;width:12px;height:12px"><svg width="12" height="12" viewBox="0 0 12 12"><defs><linearGradient id="gv" x1="0" y1="0" x2="0" y2="1"><stop offset="0" stop-color="#80d0a0"/><stop offset="1" stop-color="#108050"/></linearGradient></defs><circle cx="6" cy="6" r="5.5" fill="url(#gv)"/></svg></div>
<div class="t" style="left:54px;top:222px;height:17px;line-height:17px">testControl<span class="ty"> : struct_testcontrol</span></div>
<div style="left:15px;top:246px;width:12px;height:1px;border-top:1px dotted #606060"></div>
<div style="left:31px;top:240px;width:12px;height:12px"><svg width="12" height="12" viewBox="0 0 12 12"><defs><linearGradient id="gv" x1="0" y1="0" x2="0" y2="1"><stop offset="0" stop-color="#80d0a0"/><stop offset="1" stop-color="#108050"/></linearGradient></defs><circle cx="6" cy="6" r="5.5" fill="url(#gv)"/></svg></div>
<div class="t" style="left:54px;top:239px;height:17px;line-height:17px">srio_iterationCount<span class="ty"> : uint32_t</span></div>
<div style="left:15px;top:263px;width:12px;height:1px;border-top:1px dotted #606060"></div>
<div style="left:31px;top:257px;width:12px;height:12px"><svg width="12" height="12" viewBox="0 0 12 12"><defs><linearGradient id="gv" x1="0" y1="0" x2="0" y2="1"><stop offset="0" stop-color="#80d0a0"/><stop offset="1" stop-color="#108050"/></linearGradient></defs><circle cx="6" cy="6" r="5.5" fill="url(#gv)"/></svg></div>
<div class="t" style="left:54px;top:256px;height:17px;line-height:17px">srio_numDioPackets<span class="ty"> : uint64_t</span></div>
<div style="left:15px;top:280px;width:12px;height:1px;border-top:1px dotted #606060"></div>
<div style="left:31px;top:274px;width:12px;height:12px"><svg width="12" height="12" viewBox="0 0 12 12"><defs><linearGradient id="gv" x1="0" y1="0" x2="0" y2="1"><stop offset="0" stop-color="#80d0a0"/><stop offset="1" stop-color="#108050"/></linearGradient></defs><circle cx="6" cy="6" r="5.5" fill="url(#gv)"/></svg></div>
<div class="t" style="left:54px;top:273px;height:17px;line-height:17px">srio_latencyNumPackets<span class="ty"> : uint64_t</span></div>
<div style="left:15px;top:297px;width:12px;height:1px;border-top:1px dotted #606060"></div>
<div style="left:31px;top:291px;width:12px;height:12px"><svg width="12" height="12" viewBox="0 0 12 12"><defs><linearGradient id="gv" x1="0" y1="0" x2="0" y2="1"><stop offset="0" stop-color="#80d0a0"/><stop offset="1" stop-color="#108050"/></linearGradient></defs><circle cx="6" cy="6" r="5.5" fill="url(#gv)"/></svg></div>
<div class="t" style="left:54px;top:290px;height:17px;line-height:17px">srio_usePolledMode<span class="ty"> : bool</span></div>
<div style="left:15px;top:314px;width:12px;height:1px;border-top:1px dotted #606060"></div>
<div style="left:31px;top:308px;width:12px;height:12px"><svg width="12" height="12" viewBox="0 0 12 12"><defs><linearGradient id="gv" x1="0" y1="0" x2="0" y2="1"><stop offset="0" stop-color="#80d0a0"/><stop offset="1" stop-color="#108050"/></linearGradient></defs><circle cx="6" cy="6" r="5.5" fill="url(#gv)"/></svg></div>
<div class="t" style="left:54px;top:307px;height:17px;line-height:17px">srio_device_ID1<span class="ty"> : uint32_t</span></div>
<div style="left:15px;top:331px;width:12px;height:1px;border-top:1px dotted #606060"></div>
<div style="left:31px;top:325px;width:12px;height:12px"><svg width="12" height="12" viewBox="0 0 12 12"><defs><linearGradient id="gv" x1="0" y1="0" x2="0" y2="1"><stop offset="0" stop-color="#80d0a0"/><stop offset="1" stop-color="#108050"/></linearGradient></defs><circle cx="6" cy="6" r="5.5" fill="url(#gv)"/></svg></div>
<div class="t" style="left:54px;top:324px;height:17px;line-height:17px">srio_device_ID2<span class="ty"> : uint32_t</span></div>
<div style="left:15px;top:348px;width:12px;height:1px;border-top:1px dotted #606060"></div>
<div style="left:31px;top:342px;width:12px;height:12px"><svg width="12" height="12" viewBox="0 0 12 12"><defs><linearGradient id="gv" x1="0" y1="0" x2="0" y2="1"><stop offset="0" stop-color="#80d0a0"/><stop offset="1" stop-color="#108050"/></linearGradient></defs><circle cx="6" cy="6" r="5.5" fill="url(#gv)"/></svg></div>
<div class="t" style="left:54px;top:341px;height:17px;line-height:17px">mgmtSocket<span class="ty"> : Srio_SockHandle</span></div>
<div style="left:15px;top:365px;width:12px;height:1px;border-top:1px dotted #606060"></div>
<div style="left:31px;top:359px;width:12px;height:12px"><svg width="12" height="12" viewBox="0 0 12 12"><defs><linearGradient id="gv" x1="0" y1="0" x2="0" y2="1"><stop offset="0" stop-color="#80d0a0"/><stop offset="1" stop-color="#108050"/></linearGradient></defs><circle cx="6" cy="6" r="5.5" fill="url(#gv)"/></svg></div>
<div class="t" style="left:54px;top:358px;height:17px;line-height:17px">hAppManagedSrioDrv<span class="ty"> : Srio_DrvHandle</span></div>
<div style="left:15px;top:382px;width:12px;height:1px;border-top:1px dotted #606060"></div>
<div style="left:33px;top:378px;width:8px;height:8px"><svg width="8" height="8" viewBox="0 0 8 8"><circle cx="4" cy="4" r="3.3" fill="#5ab070" stroke="#1e7040" stroke-width="0.8"/></svg></div>
<div class="t" style="left:44px;top:371px;height:12px;line-height:12px;color:#d01030;font-size:9.5px">S</div>
<div class="t" style="left:54px;top:375px;height:17px;line-height:17px">tputExampleReadTime()<span class="ty"> : uint64_t</span></div>
<div style="left:15px;top:399px;width:12px;height:1px;border-top:1px dotted #606060"></div>
<div style="left:33px;top:395px;width:8px;height:8px"><svg width="8" height="8" viewBox="0 0 8 8"><circle cx="4" cy="4" r="3.3" fill="#5ab070" stroke="#1e7040" stroke-width="0.8"/></svg></div>
<div class="t" style="left:44px;top:388px;height:12px;line-height:12px;color:#d01030;font-size:9.5px">S</div>
<div class="t" style="left:54px;top:392px;height:17px;line-height:17px">l2_global_address_for_core(uint32_t, uint32_t)<span class="ty"> : uint32_t</span></div>
<div style="left:15px;top:416px;width:12px;height:1px;border-top:1px dotted #606060"></div>
<div style="left:33px;top:412px;width:8px;height:8px"><svg width="8" height="8" viewBox="0 0 8 8"><circle cx="4" cy="4" r="3.3" fill="#5ab070" stroke="#1e7040" stroke-width="0.8"/></svg></div>
<div class="t" style="left:44px;top:405px;height:12px;line-height:12px;color:#d01030;font-size:9.5px">S</div>
<div class="t" style="left:54px;top:409px;height:17px;line-height:17px">l2_global_address(uint32_t)<span class="ty"> : uint32_t</span></div>
<div style="left:15px;top:433px;width:12px;height:1px;border-top:1px dotted #606060"></div>
<div style="left:33px;top:429px;width:8px;height:8px"><svg width="8" height="8" viewBox="0 0 8 8"><circle cx="4" cy="4" r="3.3" fill="#5ab070" stroke="#1e7040" stroke-width="0.8"/></svg></div>
<div class="t" style="left:54px;top:426px;height:17px;line-height:17px">myDIOIsr(UArg)<span class="ty"> : void</span></div>
<div style="left:15px;top:450px;width:12px;height:1px;border-top:1px dotted #606060"></div>
<div style="left:33px;top:446px;width:8px;height:8px"><svg width="8" height="8" viewBox="0 0 8 8"><circle cx="4" cy="4" r="3.3" fill="#5ab070" stroke="#1e7040" stroke-width="0.8"/></svg></div>
<div class="t" style="left:54px;top:443px;height:17px;line-height:17px">createMgmtSocket(void)<span class="ty"> : Srio_SockHandle</span></div>
<div style="left:15px;top:467px;width:12px;height:1px;border-top:1px dotted #606060"></div>
<div style="left:33px;top:463px;width:8px;height:8px"><svg width="8" height="8" viewBox="0 0 8 8"><circle cx="4" cy="4" r="3.3" fill="#5ab070" stroke="#1e7040" stroke-width="0.8"/></svg></div>
<div class="t" style="left:44px;top:456px;height:12px;line-height:12px;color:#d01030;font-size:9.5px">S</div>
<div class="t" style="left:54px;top:460px;height:17px;line-height:17px">sendMgmtPingReply(void)<span class="ty"> : void</span></div>
<div style="left:15px;top:484px;width:12px;height:1px;border-top:1px dotted #606060"></div>
<div style="left:33px;top:480px;width:8px;height:8px"><svg width="8" height="8" viewBox="0 0 8 8"><circle cx="4" cy="4" r="3.3" fill="#5ab070" stroke="#1e7040" stroke-width="0.8"/></svg></div>
<div class="t" style="left:44px;top:473px;height:12px;line-height:12px;color:#d01030;font-size:9.5px">S</div>
<div class="t" style="left:54px;top:477px;height:17px;line-height:17px">waitMgmtPingRequest(void)<span class="ty"> : void</span></div>
<div style="left:15px;top:501px;width:12px;height:1px;border-top:1px dotted #606060"></div>
<div style="left:33px;top:497px;width:8px;height:8px"><svg width="8" height="8" viewBox="0 0 8 8"><circle cx="4" cy="4" r="3.3" fill="#5ab070" stroke="#1e7040" stroke-width="0.8"/></svg></div>
<div class="t" style="left:44px;top:490px;height:12px;line-height:12px;color:#d01030;font-size:9.5px">S</div>
<div class="t" style="left:54px;top:494px;height:17px;line-height:17px">sendMgmtPingRequest(void)<span class="ty"> : void</span></div>
<div style="left:15px;top:518px;width:12px;height:1px;border-top:1px dotted #606060"></div>
<div style="left:33px;top:514px;width:8px;height:8px"><svg width="8" height="8" viewBox="0 0 8 8"><circle cx="4" cy="4" r="3.3" fill="#5ab070" stroke="#1e7040" stroke-width="0.8"/></svg></div>
<div class="t" style="left:44px;top:507px;height:12px;line-height:12px;color:#d01030;font-size:9.5px">S</div>
<div class="t" style="left:54px;top:511px;height:17px;line-height:17px">waitMgmtPingResponse(void)<span class="ty"> : void</span></div>
<div style="left:15px;top:535px;width:12px;height:1px;border-top:1px dotted #606060"></div>
<div style="left:33px;top:531px;width:8px;height:8px"><svg width="8" height="8" viewBox="0 0 8 8"><circle cx="4" cy="4" r="3.3" fill="#5ab070" stroke="#1e7040" stroke-width="0.8"/></svg></div>
<div class="t" style="left:54px;top:528px;height:17px;line-height:17px">consumerDIONReadLatencyTest(void)<span class="ty"> : Int32</span></div>
</div>
<div class="trough" style="left:322px;top:301px;width:16px;height:547px;"></div>
<div class="b3" style="left:322px;top:301px;width:16px;height:16px;"></div>
<div style="left:326px;top:306px;width:8px;height:5px"><svg width="8" height="5"><path d="M0 4.5 L4 0.5 L8 4.5Z" fill="#000"/></svg></div>
<div class="b3" style="left:322px;top:832px;width:16px;height:16px;"></div>
<div style="left:326px;top:838px;width:8px;height:5px"><svg width="8" height="5"><path d="M0 0.5 L4 4.5 L8 0.5Z" fill="#000"/></svg></div>
<div class="b3" style="left:322px;top:317px;width:16px;height:422px;"></div>
<div class="trough" style="left:22px;top:848px;width:300px;height:16px;"></div>
<div class="b3" style="left:22px;top:848px;width:16px;height:16px;"></div>
<div style="left:27px;top:852px;width:5px;height:8px"><svg width="5" height="8"><path d="M4.5 0 L0.5 4 L4.5 8Z" fill="#000"/></svg></div>
<div class="b3" style="left:306px;top:848px;width:16px;height:16px;"></div>
<div style="left:312px;top:852px;width:5px;height:8px"><svg width="5" height="8"><path d="M0.5 0 L4.5 4 L0.5 8Z" fill="#000"/></svg></div>
<div class="b3" style="left:38px;top:848px;width:240px;height:16px;"></div>
<div style="left:322px;top:848px;width:16px;height:16px;background:#808080"></div>
<div class="pb" style="left:19px;top:870px;width:322px;height:476px;"></div>
<div class="tabg" style="left:20px;top:871px;width:123px;height:25px"></div>
<div style="left:24px;top:874px;width:16px;height:16px"><svg width="16" height="16" viewBox="0 0 16 16"><path d="M2 1 L9 1 L11 3 L11 12 L2 12Z" fill="#f4f4f4" stroke="#b0a070"/><path d="M6 8 L9 6 L15 6 L15 15 L6 15Z" fill="#f8d060" stroke="#c08020"/></svg></div>
<div class="t" style="left:42px;top:873px;height:20px;line-height:20px;">Project Explorer</div>
<div style="left:128px;top:877px;width:10px;height:10px"><svg width="10" height="10"><path d="M0.5 0.5 L3.5 0.5 L5 2 L6.5 0.5 L9.5 0.5 L9.5 3.5 L8 5 L9.5 6.5 L9.5 9.5 L6.5 9.5 L5 8 L3.5 9.5 L0.5 9.5 L0.5 6.5 L2 5 L0.5 3.5Z" fill="#fff" stroke="#303030" stroke-width="1.1"/></svg></div>
<div style="left:228px;top:876px;width:16px;height:16px"><svg width="16" height="16" viewBox="0 0 16 16"><rect x="2" y="2" width="10" height="9" fill="#c8d8e8" stroke="#6080b0"/><rect x="4" y="5" width="10" height="9" fill="#dce8f4" stroke="#6080b0"/><path d="M6 10 L12 10" stroke="#2050a0" stroke-width="1.5"/></svg></div>
<div style="left:262px;top:874px;width:16px;height:16px"><svg width="16" height="16" viewBox="0 0 16 16"><path d="M2 5 L14 5 M2 5 L5 2 M2 5 L5 8 M14 11 L2 11 M14 11 L11 8 M14 11 L11 14" stroke="#e0a020" stroke-width="1.8" fill="none"/></svg></div>
<div style="left:288px;top:875px;width:10px;height:6px"><svg width="10" height="6"><path d="M1 1 L9 1 L5 5Z" fill="#fff" stroke="#303030" stroke-width="1.3" stroke-linejoin="round"/></svg></div>
<div style="left:307px;top:875px;width:10px;height:5px"><svg width="10" height="5"><rect x="0.8" y="0.8" width="8.4" height="3" rx="1" fill="#fff" stroke="#303030" stroke-width="1.5"/></svg></div>
<div style="left:325px;top:875px;width:10px;height:10px"><svg width="10" height="10"><rect x="0.8" y="0.8" width="8.4" height="8.4" rx="1" fill="#fff" stroke="#303030" stroke-width="1.5"/><rect x="1" y="2.6" width="8" height="1.4" fill="#303030"/></svg></div>
<div style="left:20px;top:895px;width:320px;height:450px;background:#808080"></div>
<div class="wh" style="left:22px;top:896px;width:300px;height:432px;"></div>
<div style="left:22px;top:896px;width:300px;height:432px;overflow:hidden">
<div style="left:11px;top:16px;width:1px;height:355px;border-left:1px dotted #606060"></div>
<div style="left:11px;top:390px;width:1px;height:40px;"></div>
<div style="left:7px;top:4px;width:9px;height:9px;border:1px solid #000;background:#fff"></div>
<div style="left:9px;top:8px;width:5px;height:1px;background:#000"></div>
<div style="left:17px;top:8px;width:8px;height:1px;border-top:1px dotted #606060"></div>
<div style="left:23px;top:0px;width:17px;height:16px"><svg width="17" height="16" viewBox="0 0 17 16"><path d="M1 6 L6 6 L7 4 L13 4 L13 14 L1 14Z" fill="#f8e090" stroke="#c09030"/><path d="M2 15 L5 9 L16 9 L13 15Z" fill="#7ab0e8" stroke="#3060a0"/><text x="5" y="5" font-size="5" fill="#2050a0" font-family="Liberation Sans">RTSC</text></svg></div>
<div class="t" style="left:43px;top:1px;height:17px;line-height:17px;font-weight:bold;letter-spacing:0.5px">SRIO_TputBenchmarkingTestProject <span style="color:#a08040">[Active</span></div>
<div style="left:26px;top:21px;width:9px;height:9px;border:1px solid #000;background:#fff"></div>
<div style="left:28px;top:25px;width:5px;height:1px;background:#000"></div>
<div style="left:30px;top:23px;width:1px;height:5px;background:#000"></div>
<div style="left:36px;top:25px;width:6px;height:1px;border-top:1px dotted #606060"></div>
<div style="left:42px;top:17px;width:16px;height:16px"><svg width="16" height="16" viewBox="0 0 16 16"><rect x="7" y="1" width="7" height="9" fill="#f4f4f4" stroke="#b0a070"/><rect x="4" y="3" width="7" height="9" fill="#f4f4f4" stroke="#b0a070"/><rect x="1" y="6" width="8" height="9" fill="#f8f8f8" stroke="#b08040"/><text x="2" y="14" font-size="8" font-weight="bold" fill="#2050a0" font-family="Liberation Sans">h</text></svg></div>
<div class="t" style="left:61px;top:18px;height:17px;line-height:17px;">Includes</div>
<div style="left:26px;top:38px;width:9px;height:9px;border:1px solid #000;background:#fff"></div>
<div style="left:28px;top:42px;width:5px;height:1px;background:#000"></div>
<div style="left:30px;top:40px;width:1px;height:5px;background:#000"></div>
<div style="left:36px;top:42px;width:6px;height:1px;border-top:1px dotted #606060"></div>
<div style="left:42px;top:34px;width:16px;height:16px"><svg width="16" height="16" viewBox="0 0 16 16"><path d="M1.5 1.5 L8.5 1.5 L11.5 4.5 L11.5 14.5 L1.5 14.5Z" fill="#f8fbff" stroke="#b89a50"/><rect x="6" y="9" width="7" height="6" fill="#fff" stroke="#1e3a80"/><path d="M8 14 L11 11" stroke="#1e3a80"/><text x="3" y="10" font-size="8" font-weight="bold" fill="#1e5aa0" font-family="Liberation Sans">c</text></svg></div>
<div class="t" style="left:61px;top:35px;height:17px;line-height:17px;">benchmarking.c</div>
<div style="left:26px;top:55px;width:9px;height:9px;border:1px solid #000;background:#fff"></div>
<div style="left:28px;top:59px;width:5px;height:1px;background:#000"></div>
<div style="left:30px;top:57px;width:1px;height:5px;background:#000"></div>
<div style="left:36px;top:59px;width:6px;height:1px;border-top:1px dotted #606060"></div>
<div style="left:42px;top:51px;width:16px;height:16px"><svg width="16" height="16" viewBox="0 0 16 16"><path d="M1.5 1.5 L8.5 1.5 L11.5 4.5 L11.5 14.5 L1.5 14.5Z" fill="#f8fbff" stroke="#b89a50"/><rect x="6" y="9" width="7" height="6" fill="#fff" stroke="#1e3a80"/><path d="M8 14 L11 11" stroke="#1e3a80"/></svg></div>
<div class="t" style="left:61px;top:52px;height:17px;line-height:17px;">benchmarking.cmd</div>
<div style="left:26px;top:72px;width:9px;height:9px;border:1px solid #000;background:#fff"></div>
<div style="left:28px;top:76px;width:5px;height:1px;background:#000"></div>
<div style="left:30px;top:74px;width:1px;height:5px;background:#000"></div>
<div style="left:36px;top:76px;width:6px;height:1px;border-top:1px dotted #606060"></div>
<div style="left:42px;top:68px;width:16px;height:16px"><svg width="16" height="16" viewBox="0 0 16 16"><path d="M1.5 1.5 L8.5 1.5 L11.5 4.5 L11.5 14.5 L1.5 14.5Z" fill="#f8fbff" stroke="#b89a50"/><rect x="6" y="9" width="7" height="6" fill="#fff" stroke="#1e3a80"/><path d="M8 14 L11 11" stroke="#1e3a80"/></svg></div>
<div class="t" style="left:61px;top:69px;height:17px;line-height:17px;">benchmarking.h</div>
<div style="left:26px;top:89px;width:9px;height:9px;border:1px solid #000;background:#fff"></div>
<div style="left:28px;top:93px;width:5px;height:1px;background:#000"></div>
<div style="left:30px;top:91px;width:1px;height:5px;background:#000"></div>
<div style="left:36px;top:93px;width:6px;height:1px;border-top:1px dotted #606060"></div>
<div style="left:42px;top:85px;width:16px;height:16px"><svg width="16" height="16" viewBox="0 0 16 16"><path d="M1.5 1.5 L8.5 1.5 L11.5 4.5 L11.5 14.5 L1.5 14.5Z" fill="#f8fbff" stroke="#b89a50"/><rect x="6" y="9" width="7" height="6" fill="#fff" stroke="#1e3a80"/><path d="M8 14 L11 11" stroke="#1e3a80"/><text x="3" y="10" font-size="8" font-weight="bold" fill="#1e5aa0" font-family="Liberation Sans">c</text></svg></div>
<div class="t" style="left:61px;top:86px;height:17px;line-height:17px;">cppi_device.c</div>
<div style="left:26px;top:106px;width:9px;height:9px;border:1px solid #000;background:#fff"></div>
<div style="left:28px;top:110px;width:5px;height:1px;background:#000"></div>
<div style="left:30px;top:108px;width:1px;height:5px;background:#000"></div>
<div style="left:36px;top:110px;width:6px;height:1px;border-top:1px dotted #606060"></div>
<div style="left:42px;top:102px;width:16px;height:16px"><svg width="16" height="16" viewBox="0 0 16 16"><path d="M1.5 1.5 L8.5 1.5 L11.5 4.5 L11.5 14.5 L1.5 14.5Z" fill="#f8fbff" stroke="#b89a50"/><rect x="6" y="9" width="7" height="6" fill="#fff" stroke="#1e3a80"/><path d="M8 14 L11 11" stroke="#1e3a80"/><text x="3" y="10" font-size="8" font-weight="bold" fill="#1e5aa0" font-family="Liberation Sans">c</text></svg></div>
<div class="t" style="left:61px;top:103px;height:17px;line-height:17px;">listlib.c</div>
<div style="left:26px;top:123px;width:9px;height:9px;border:1px solid #000;background:#fff"></div>
<div style="left:28px;top:127px;width:5px;height:1px;background:#000"></div>
<div style="left:30px;top:125px;width:1px;height:5px;background:#000"></div>
<div style="left:36px;top:127px;width:6px;height:1px;border-top:1px dotted #606060"></div>
<div style="left:42px;top:119px;width:16px;height:16px"><svg width="16" height="16" viewBox="0 0 16 16"><path d="M1.5 1.5 L8.5 1.5 L11.5 4.5 L11.5 14.5 L1.5 14.5Z" fill="#f8fbff" stroke="#b89a50"/><rect x="6" y="9" width="7" height="6" fill="#fff" stroke="#1e3a80"/><path d="M8 14 L11 11" stroke="#1e3a80"/><text x="3" y="10" font-size="8" font-weight="bold" fill="#1e5aa0" font-family="Liberation Sans">c</text></svg></div>
<div class="t" style="left:61px;top:120px;height:17px;line-height:17px;">osal.c</div>
<div style="left:26px;top:140px;width:9px;height:9px;border:1px solid #000;background:#fff"></div>
<div style="left:28px;top:144px;width:5px;height:1px;background:#000"></div>
<div style="left:30px;top:142px;width:1px;height:5px;background:#000"></div>
<div style="left:36px;top:144px;width:6px;height:1px;border-top:1px dotted #606060"></div>
<div style="left:42px;top:136px;width:16px;height:16px"><svg width="16" height="16" viewBox="0 0 16 16"><path d="M1.5 1.5 L8.5 1.5 L11.5 4.5 L11.5 14.5 L1.5 14.5Z" fill="#f8fbff" stroke="#b89a50"/><rect x="6" y="9" width="7" height="6" fill="#fff" stroke="#1e3a80"/><path d="M8 14 L11 11" stroke="#1e3a80"/><text x="3" y="10" font-size="8" font-weight="bold" fill="#1e5aa0" font-family="Liberation Sans">c</text></svg></div>
<div class="t" style="left:61px;top:137px;height:17px;line-height:17px;">qmss_device.c</div>
<div style="left:26px;top:157px;width:9px;height:9px;border:1px solid #000;background:#fff"></div>
<div style="left:28px;top:161px;width:5px;height:1px;background:#000"></div>
<div style="left:30px;top:159px;width:1px;height:5px;background:#000"></div>
<div style="left:36px;top:161px;width:6px;height:1px;border-top:1px dotted #606060"></div>
<div style="left:42px;top:153px;width:16px;height:16px"><svg width="16" height="16" viewBox="0 0 16 16"><path d="M1.5 1.5 L8.5 1.5 L11.5 4.5 L11.5 14.5 L1.5 14.5Z" fill="#f8fbff" stroke="#b89a50"/><rect x="6" y="9" width="7" height="6" fill="#fff" stroke="#1e3a80"/><path d="M8 14 L11 11" stroke="#1e3a80"/><text x="3" y="10" font-size="8" font-weight="bold" fill="#1e5aa0" font-family="Liberation Sans">c</text></svg></div>
<div class="t" style="left:61px;top:154px;height:17px;line-height:17px;">srio_device_tput.c</div>
<div style="left:26px;top:174px;width:9px;height:9px;border:1px solid #000;background:#fff"></div>
<div style="left:28px;top:178px;width:5px;height:1px;background:#000"></div>
<div style="left:30px;top:176px;width:1px;height:5px;background:#000"></div>
<div style="left:36px;top:178px;width:6px;height:1px;border-top:1px dotted #606060"></div>
<div style="left:42px;top:170px;width:16px;height:16px"><svg width="16" height="16" viewBox="0 0 16 16"><path d="M1.5 1.5 L8.5 1.5 L11.5 4.5 L11.5 14.5 L1.5 14.5Z" fill="#f8fbff" stroke="#b89a50"/><rect x="6" y="9" width="7" height="6" fill="#fff" stroke="#1e3a80"/><path d="M8 14 L11 11" stroke="#1e3a80"/><text x="3" y="10" font-size="8" font-weight="bold" fill="#1e5aa0" font-family="Liberation Sans">c</text></svg></div>
<div class="t" style="left:61px;top:171px;height:17px;line-height:17px;">srio_dio_tput.c</div>
<div style="left:26px;top:191px;width:9px;height:9px;border:1px solid #000;background:#fff"></div>
<div style="left:28px;top:195px;width:5px;height:1px;background:#000"></div>
<div style="left:30px;top:193px;width:1px;height:5px;background:#000"></div>
<div style="left:36px;top:195px;width:6px;height:1px;border-top:1px dotted #606060"></div>
<div style="left:42px;top:187px;width:16px;height:16px"><svg width="16" height="16" viewBox="0 0 16 16"><path d="M1.5 1.5 L8.5 1.5 L11.5 4.5 L11.5 14.5 L1.5 14.5Z" fill="#f8fbff" stroke="#b89a50"/><rect x="6" y="9" width="7" height="6" fill="#fff" stroke="#1e3a80"/><path d="M8 14 L11 11" stroke="#1e3a80"/><text x="3" y="10" font-size="8" font-weight="bold" fill="#1e5aa0" font-family="Liberation Sans">c</text></svg></div>
<div class="t" style="left:61px;top:188px;height:17px;line-height:17px;">srio_drv.c</div>
<div style="left:26px;top:208px;width:9px;height:9px;border:1px solid #000;background:#fff"></div>
<div style="left:28px;top:212px;width:5px;height:1px;background:#000"></div>
<div style="left:30px;top:210px;width:1px;height:5px;background:#000"></div>
<div style="left:36px;top:212px;width:6px;height:1px;border-top:1px dotted #606060"></div>
<div style="left:42px;top:204px;width:16px;height:16px"><svg width="16" height="16" viewBox="0 0 16 16"><path d="M1.5 1.5 L8.5 1.5 L11.5 4.5 L11.5 14.5 L1.5 14.5Z" fill="#f8fbff" stroke="#b89a50"/><rect x="6" y="9" width="7" height="6" fill="#fff" stroke="#1e3a80"/><path d="M8 14 L11 11" stroke="#1e3a80"/><text x="3" y="10" font-size="8" font-weight="bold" fill="#1e5aa0" font-family="Liberation Sans">c</text></svg></div>
<div class="t" style="left:61px;top:205px;height:17px;line-height:17px;">srio_laneconfig.c</div>
<div style="left:26px;top:225px;width:9px;height:9px;border:1px solid #000;background:#fff"></div>
<div style="left:28px;top:229px;width:5px;height:1px;background:#000"></div>
<div style="left:30px;top:227px;width:1px;height:5px;background:#000"></div>
<div style="left:36px;top:229px;width:6px;height:1px;border-top:1px dotted #606060"></div>
<div style="left:42px;top:221px;width:16px;height:16px"><svg width="16" height="16" viewBox="0 0 16 16"><path d="M1.5 1.5 L8.5 1.5 L11.5 4.5 L11.5 14.5 L1.5 14.5Z" fill="#f8fbff" stroke="#b89a50"/><rect x="6" y="9" width="7" height="6" fill="#fff" stroke="#1e3a80"/><path d="M8 14 L11 11" stroke="#1e3a80"/></svg></div>
<div class="t" style="left:61px;top:222px;height:17px;line-height:17px;">srio_laneconfig.h</div>
<div style="left:26px;top:242px;width:9px;height:9px;border:1px solid #000;background:#fff"></div>
<div style="left:28px;top:246px;width:5px;height:1px;background:#000"></div>
<div style="left:30px;top:244px;width:1px;height:5px;background:#000"></div>
<div style="left:36px;top:246px;width:6px;height:1px;border-top:1px dotted #606060"></div>
<div style="left:42px;top:238px;width:16px;height:16px"><svg width="16" height="16" viewBox="0 0 16 16"><path d="M1.5 1.5 L8.5 1.5 L11.5 4.5 L11.5 14.5 L1.5 14.5Z" fill="#f8fbff" stroke="#b89a50"/><rect x="6" y="9" width="7" height="6" fill="#fff" stroke="#1e3a80"/><path d="M8 14 L11 11" stroke="#1e3a80"/><text x="3" y="10" font-size="8" font-weight="bold" fill="#1e5aa0" font-family="Liberation Sans">c</text></svg></div>
<div class="t" style="left:61px;top:239px;height:17px;line-height:17px;">srio_status_decode.c</div>
<div style="left:26px;top:259px;width:9px;height:9px;border:1px solid #000;background:#fff"></div>
<div style="left:28px;top:263px;width:5px;height:1px;background:#000"></div>
<div style="left:30px;top:261px;width:1px;height:5px;background:#000"></div>
<div style="left:36px;top:263px;width:6px;height:1px;border-top:1px dotted #606060"></div>
<div style="left:42px;top:255px;width:16px;height:16px"><svg width="16" height="16" viewBox="0 0 16 16"><path d="M1.5 1.5 L8.5 1.5 L11.5 4.5 L11.5 14.5 L1.5 14.5Z" fill="#f8fbff" stroke="#b89a50"/><rect x="6" y="9" width="7" height="6" fill="#fff" stroke="#1e3a80"/><path d="M8 14 L11 11" stroke="#1e3a80"/></svg></div>
<div class="t" style="left:61px;top:256px;height:17px;line-height:17px;">srio_tput.h</div>
<div style="left:26px;top:276px;width:9px;height:9px;border:1px solid #000;background:#fff"></div>
<div style="left:28px;top:280px;width:5px;height:1px;background:#000"></div>
<div style="left:30px;top:278px;width:1px;height:5px;background:#000"></div>
<div style="left:36px;top:280px;width:6px;height:1px;border-top:1px dotted #606060"></div>
<div style="left:42px;top:272px;width:16px;height:16px"><svg width="16" height="16" viewBox="0 0 16 16"><path d="M1.5 1.5 L8.5 1.5 L11.5 4.5 L11.5 14.5 L1.5 14.5Z" fill="#f8fbff" stroke="#b89a50"/><rect x="6" y="9" width="7" height="6" fill="#fff" stroke="#1e3a80"/><path d="M8 14 L11 11" stroke="#1e3a80"/><text x="3" y="10" font-size="8" font-weight="bold" fill="#1e5aa0" font-family="Liberation Sans">c</text></svg></div>
<div style="left:59px;top:273px;width:98px;height:16px;background:#a0a0a0"></div>
<div class="t" style="left:61px;top:273px;height:17px;line-height:17px;">srio_type11_tput.c</div>
<div style="left:26px;top:293px;width:9px;height:9px;border:1px solid #000;background:#fff"></div>
<div style="left:28px;top:297px;width:5px;height:1px;background:#000"></div>
<div style="left:30px;top:295px;width:1px;height:5px;background:#000"></div>
<div style="left:36px;top:297px;width:6px;height:1px;border-top:1px dotted #606060"></div>
<div style="left:42px;top:289px;width:16px;height:16px"><svg width="16" height="16" viewBox="0 0 16 16"><path d="M1.5 1.5 L8.5 1.5 L11.5 4.5 L11.5 14.5 L1.5 14.5Z" fill="#f8fbff" stroke="#b89a50"/><rect x="6" y="9" width="7" height="6" fill="#fff" stroke="#1e3a80"/><path d="M8 14 L11 11" stroke="#1e3a80"/><text x="3" y="10" font-size="8" font-weight="bold" fill="#1e5aa0" font-family="Liberation Sans">c</text></svg></div>
<div class="t" style="left:61px;top:290px;height:17px;line-height:17px;">tput_utils.c</div>
<div style="left:30px;top:314px;width:12px;height:1px;border-top:1px dotted #606060"></div>
<div style="left:42px;top:306px;width:16px;height:16px"><svg width="16" height="16" viewBox="0 0 16 16"><path d="M1.5 1.5 L8.5 1.5 L11.5 4.5 L11.5 14.5 L1.5 14.5Z" fill="#f8fbff" stroke="#b89a50"/><rect x="6" y="9" width="7" height="6" fill="#fff" stroke="#1e3a80"/><path d="M8 14 L11 11" stroke="#1e3a80"/></svg></div>
<div class="t" style="left:61px;top:307px;height:17px;line-height:17px;">benchmarking.cfg</div>
<div style="left:30px;top:331px;width:12px;height:1px;border-top:1px dotted #606060"></div>
<div style="left:42px;top:323px;width:16px;height:16px"><svg width="16" height="16" viewBox="0 0 16 16"><path d="M1.5 1.5 L8.5 1.5 L11.5 4.5 L11.5 14.5 L1.5 14.5Z" fill="#f8fbff" stroke="#b89a50"/><rect x="6" y="9" width="7" height="6" fill="#fff" stroke="#1e3a80"/><path d="M8 14 L11 11" stroke="#1e3a80"/></svg></div>
<div class="t" style="left:61px;top:324px;height:17px;line-height:17px;">macros.ini_initial</div>
<div style="left:30px;top:348px;width:12px;height:1px;border-top:1px dotted #606060"></div>
<div style="left:42px;top:340px;width:16px;height:16px"><svg width="16" height="16" viewBox="0 0 16 16"><path d="M1.5 1.5 L8.5 1.5 L11.5 4.5 L11.5 14.5 L1.5 14.5Z" fill="#f8fbff" stroke="#b89a50"/><rect x="6" y="9" width="7" height="6" fill="#fff" stroke="#1e3a80"/><path d="M8 14 L11 11" stroke="#1e3a80"/></svg></div>
<div class="t" style="left:61px;top:341px;height:17px;line-height:17px;">Readme.txt</div>
<div style="left:7px;top:361px;width:9px;height:9px;border:1px solid #000;background:#fff"></div>
<div style="left:9px;top:365px;width:5px;height:1px;background:#000"></div>
<div style="left:17px;top:365px;width:8px;height:1px;border-top:1px dotted #606060"></div>
<div style="left:23px;top:357px;width:17px;height:16px"><svg width="17" height="16" viewBox="0 0 17 16"><path d="M1 6 L6 6 L7 4 L13 4 L13 14 L1 14Z" fill="#f8e090" stroke="#c09030"/><path d="M2 15 L5 9 L16 9 L13 15Z" fill="#7ab0e8" stroke="#3060a0"/><text x="5" y="5" font-size="5" fill="#2050a0" font-family="Liberation Sans">RTSC</text></svg></div>
<div class="t" style="left:43px;top:358px;height:17px;line-height:17px;">test</div>
<div style="left:26px;top:378px;width:9px;height:9px;border:1px solid #000;background:#fff"></div>
<div style="left:28px;top:382px;width:5px;height:1px;background:#000"></div>
<div style="left:30px;top:380px;width:1px;height:5px;background:#000"></div>
<div style="left:36px;top:382px;width:6px;height:1px;border-top:1px dotted #606060"></div>
<div style="left:42px;top:374px;width:16px;height:16px"><svg width="16" height="16" viewBox="0 0 16 16"><rect x="7" y="1" width="7" height="9" fill="#f4f4f4" stroke="#b0a070"/><rect x="4" y="3" width="7" height="9" fill="#f4f4f4" stroke="#b0a070"/><rect x="1" y="6" width="8" height="9" fill="#f8f8f8" stroke="#b08040"/><text x="2" y="14" font-size="8" font-weight="bold" fill="#2050a0" font-family="Liberation Sans">h</text></svg></div>
<div class="t" style="left:61px;top:375px;height:17px;line-height:17px;">Includes</div>
<div style="left:26px;top:395px;width:9px;height:9px;border:1px solid #000;background:#fff"></div>
<div style="left:28px;top:399px;width:5px;height:1px;background:#000"></div>
<div style="left:30px;top:397px;width:1px;height:5px;background:#000"></div>
<div style="left:36px;top:399px;width:6px;height:1px;border-top:1px dotted #606060"></div>
<div style="left:42px;top:391px;width:16px;height:16px"><svg width="16" height="16" viewBox="0 0 16 16"><path d="M1.5 1.5 L8.5 1.5 L11.5 4.5 L11.5 14.5 L1.5 14.5Z" fill="#f8fbff" stroke="#b89a50"/><rect x="6" y="9" width="7" height="6" fill="#fff" stroke="#1e3a80"/><path d="M8 14 L11 11" stroke="#1e3a80"/><text x="3" y="10" font-size="8" font-weight="bold" fill="#1e5aa0" font-family="Liberation Sans">c</text></svg></div>
<div class="t" style="left:61px;top:392px;height:17px;line-height:17px;">main.c</div>
<div style="left:30px;top:416px;width:12px;height:1px;border-top:1px dotted #606060"></div>
<div style="left:42px;top:408px;width:16px;height:16px"><svg width="16" height="16" viewBox="0 0 16 16"><path d="M1.5 1.5 L8.5 1.5 L11.5 4.5 L11.5 14.5 L1.5 14.5Z" fill="#f8fbff" stroke="#b89a50"/><rect x="6" y="9" width="7" height="6" fill="#fff" stroke="#1e3a80"/><path d="M8 14 L11 11" stroke="#1e3a80"/></svg></div>
<div class="t" style="left:61px;top:409px;height:17px;line-height:17px;">app.cfg</div>
<div style="left:30px;top:433px;width:12px;height:1px;border-top:1px dotted #606060"></div>
<div style="left:42px;top:425px;width:16px;height:16px"><svg width="16" height="16" viewBox="0 0 16 16"><path d="M1.5 1.5 L8.5 1.5 L11.5 4.5 L11.5 14.5 L1.5 14.5Z" fill="#f8fbff" stroke="#b89a50"/><rect x="6" y="9" width="7" height="6" fill="#fff" stroke="#1e3a80"/><path d="M8 14 L11 11" stroke="#1e3a80"/></svg></div>
<div class="t" style="left:61px;top:426px;height:17px;line-height:17px;">makefile.defs</div>
<div style="left:11px;top:373px;width:1px;height:0px;"></div>
<div style="left:33px;top:373px;width:1px;height:40px;border-left:1px dotted #606060"></div>
</div>
<div class="trough" style="left:322px;top:896px;width:16px;height:432px;"></div>
<div class="b3" style="left:322px;top:896px;width:16px;height:16px;"></div>
<div style="left:326px;top:901px;width:8px;height:5px"><svg width="8" height="5"><path d="M0 4.5 L4 0.5 L8 4.5Z" fill="#000"/></svg></div>
<div class="b3" style="left:322px;top:1312px;width:16px;height:16px;"></div>
<div style="left:326px;top:1318px;width:8px;height:5px"><svg width="8" height="5"><path d="M0 0.5 L4 4.5 L8 0.5Z" fill="#000"/></svg></div>
<div class="b3" style="left:322px;top:912px;width:16px;height:383px;"></div>
<div class="trough" style="left:22px;top:1328px;width:300px;height:16px;"></div>
<div class="b3" style="left:22px;top:1328px;width:16px;height:16px;"></div>
<div style="left:27px;top:1332px;width:5px;height:8px"><svg width="5" height="8"><path d="M4.5 0 L0.5 4 L4.5 8Z" fill="#000"/></svg></div>
<div class="b3" style="left:306px;top:1328px;width:16px;height:16px;"></div>
<div style="left:312px;top:1332px;width:5px;height:8px"><svg width="5" height="8"><path d="M0.5 0 L4.5 4 L0.5 8Z" fill="#000"/></svg></div>
<div class="b3" style="left:38px;top:1328px;width:228px;height:16px;"></div>
<div style="left:322px;top:1328px;width:16px;height:16px;background:#808080"></div>
<div class="pb" style="left:344px;top:275px;width:771px;height:817px;"></div>
<div style="left:345px;top:300px;width:770px;height:791px;background:#9ca8c8"></div>
<div class="tabb" style="left:345px;top:276px;width:120px;height:25px"></div>
<div style="left:350px;top:279px;width:16px;height:16px"><svg width="16" height="16" viewBox="0 0 16 16"><path d="M2.5 1.5 L9.5 1.5 L12.5 4.5 L12.5 14.5 L2.5 14.5Z" fill="#f8fbff" stroke="#b89a50"/><text x="3.5" y="12" font-family="Liberation Sans" font-size="9" font-weight="bold" fill="#1e5aa0">.c</text></svg></div>
<div class="t" style="left:368px;top:278px;height:20px;line-height:20px;">srio_dio_tput.c</div>
<div style="left:465px;top:277px;width:1px;height:23px;background:#5a5a5a"></div>
<div style="left:472px;top:279px;width:16px;height:16px"><svg width="16" height="16" viewBox="0 0 16 16"><path d="M2.5 1.5 L9.5 1.5 L12.5 4.5 L12.5 14.5 L2.5 14.5Z" fill="#f8fbff" stroke="#b89a50"/><text x="3" y="12" font-family="Liberation Sans" font-size="9" font-weight="bold" fill="#1e5aa0">.h</text></svg></div>
<div class="t" style="left:489px;top:278px;height:20px;line-height:20px;">srio_laneconfig.h</div>
<div style="left:597px;top:277px;width:1px;height:23px;background:#5a5a5a"></div>
<div style="left:604px;top:279px;width:16px;height:16px"><svg width="16" height="16" viewBox="0 0 16 16"><path d="M2.5 1.5 L9.5 1.5 L12.5 4.5 L12.5 14.5 L2.5 14.5Z" fill="#f8fbff" stroke="#b89a50"/><text x="3.5" y="12" font-family="Liberation Sans" font-size="9" font-weight="bold" fill="#1e5aa0">.c</text></svg></div>
<div class="t" style="left:621px;top:278px;height:20px;line-height:20px;">srio_status_decode.c</div>
<div style="left:750px;top:277px;width:1px;height:23px;background:#5a5a5a"></div>
<div style="left:757px;top:279px;width:16px;height:16px"><svg width="16" height="16" viewBox="0 0 16 16"><path d="M2.5 1.5 L9.5 1.5 L12.5 4.5 L12.5 14.5 L2.5 14.5Z" fill="#f8fbff" stroke="#b89a50"/><text x="3" y="12" font-family="Liberation Sans" font-size="9" font-weight="bold" fill="#1e5aa0">.h</text></svg></div>
<div class="t" style="left:774px;top:278px;height:20px;line-height:20px;">srio_tput.h</div>
<div style="left:853px;top:277px;width:1px;height:23px;background:#5a5a5a"></div>
<div style="left:860px;top:279px;width:16px;height:16px"><svg width="16" height="16" viewBox="0 0 16 16"><path d="M2.5 1.5 L9.5 1.5 L12.5 4.5 L12.5 14.5 L2.5 14.5Z" fill="#f8fbff" stroke="#b89a50"/><text x="3.5" y="12" font-family="Liberation Sans" font-size="9" font-weight="bold" fill="#1e5aa0">.c</text></svg></div>
<div class="t" style="left:877px;top:278px;height:20px;line-height:20px;">srio_type11_tput.c</div>
<div style="left:995px;top:277px;width:1px;height:23px;background:#5a5a5a"></div>
<div style="left:448px;top:282px;width:10px;height:10px"><svg width="10" height="10"><path d="M0.5 0.5 L3.5 0.5 L5 2 L6.5 0.5 L9.5 0.5 L9.5 3.5 L8 5 L9.5 6.5 L9.5 9.5 L6.5 9.5 L5 8 L3.5 9.5 L0.5 9.5 L0.5 6.5 L2 5 L0.5 3.5Z" fill="#fff" stroke="#303030" stroke-width="1.1"/></svg></div>
<div class="t" style="left:1001px;top:276px;height:14px;line-height:14px;font-size:13px">&#187;</div>
<div class="t" style="left:1008px;top:283px;height:14px;line-height:14px;font-size:10px">2</div>
<div style="left:347px;top:301px;width:12px;height:772px;background:#808080"></div>
<div style="left:347px;top:736px;width:12px;height:150px;background-color:#000;background-image:linear-gradient(45deg,#808080 25%,transparent 25%,transparent 75%,#808080 75%),linear-gradient(45deg,#808080 25%,transparent 25%,transparent 75%,#808080 75%);background-size:2px 2px;background-position:0 0,1px 1px"></div>
<div class="wh" style="left:359px;top:301px;width:725px;height:772px;"></div>
<div style="left:387px;top:301px;width:1px;height:772px;background:#808080"></div>
<div style="left:390px;top:736px;width:694px;height:150px;background:#000"></div>
<div style="left:359px;top:301px;width:725px;height:772px;overflow:hidden">
<div class="m ln" style="left:0;top:2px;width:28px;text-align:right">130</div>
<div class="m" style="left:31px;top:2px;"><span class="cm"> *  @b Description</span></div>
<div class="m ln" style="left:0;top:17px;width:28px;text-align:right">131</div>
<div class="m" style="left:31px;top:17px;"><span class="cm"> *  @n</span></div>
<div class="m ln" style="left:0;top:32px;width:28px;text-align:right">132</div>
<div class="m" style="left:31px;top:32px;"><span class="cm"> *      Utility function which converts a local address to global for the specified core.</span></div>
<div class="m ln" style="left:0;top:47px;width:28px;text-align:right">133</div>
<div class="m" style="left:31px;top:47px;"><span class="cm"> *</span></div>
<div class="m ln" style="left:0;top:62px;width:28px;text-align:right">134</div>
<div class="m" style="left:31px;top:62px;"><span class="cm"> *  <span class="sq">@param</span>[in]  <span class="sq">addr</span></span></div>
<div class="m ln" style="left:0;top:77px;width:28px;text-align:right">135</div>
<div class="m" style="left:31px;top:77px;"><span class="cm"> *      Local address to be converted</span></div>
<div class="m ln" style="left:0;top:92px;width:28px;text-align:right">136</div>
<div class="m" style="left:31px;top:92px;"><span class="cm"> *  <span class="sq">@param</span>[in]  coreNum</span></div>
<div class="m ln" style="left:0;top:107px;width:28px;text-align:right">137</div>
<div class="m" style="left:31px;top:107px;"><span class="cm"> *      Core number for which to get global address</span></div>
<div class="m ln" style="left:0;top:122px;width:28px;text-align:right">138</div>
<div class="m" style="left:31px;top:122px;"><span class="cm"> *</span></div>
<div class="m ln" style="left:0;top:137px;width:28px;text-align:right">139</div>
<div class="m" style="left:31px;top:137px;"><span class="cm"> *  <span class="sq">@retval</span></span></div>
<div class="m ln" style="left:0;top:152px;width:28px;text-align:right">140</div>
<div class="m" style="left:31px;top:152px;"><span class="cm"> *      Global Address</span></div>
<div class="m ln" style="left:0;top:167px;width:28px;text-align:right">141</div>
<div class="m" style="left:31px;top:167px;"><span class="cm"> */</span></div>
<div class="m ln" style="left:0;top:182px;width:28px;text-align:right">142</div>
<div class="m" style="left:31px;top:182px;"><span class="kw">static</span> <span class="td">uint32_t</span> <span class="fn">l2_global_address_for_core</span> (<span class="td">uint32_t</span> addr, <span class="td">uint32_t</span> coreNum)</div>
<div class="m ln" style="left:0;top:197px;width:28px;text-align:right">143</div>
<div class="m" style="left:31px;top:197px;">{</div>
<div class="m ln" style="left:0;top:212px;width:28px;text-align:right">144</div>
<div class="m" style="left:31px;top:212px;">    <span class="cm">/* Compute the global address. */</span></div>
<div class="m ln" style="left:0;top:227px;width:28px;text-align:right">145</div>
<div class="m" style="left:31px;top:227px;">    <span class="kw">return</span> (addr + (0x10000000 + (coreNum*0x1000000)));</div>
<div class="m ln" style="left:0;top:242px;width:28px;text-align:right">146</div>
<div class="m" style="left:31px;top:242px;">}</div>
<div class="m ln" style="left:0;top:257px;width:28px;text-align:right">147</div>
<div class="m" style="left:31px;top:257px;"></div>
<div class="m ln" style="left:0;top:272px;width:28px;text-align:right">148</div>
<div class="m" style="left:31px;top:272px;"><span class="cm">/**</span></div>
<div class="m ln" style="left:0;top:287px;width:28px;text-align:right">149</div>
<div class="m" style="left:31px;top:287px;"><span class="cm"> *  @b Description</span></div>
<div class="m ln" style="left:0;top:302px;width:28px;text-align:right">150</div>
<div class="m" style="left:31px;top:302px;"><span class="cm"> *  @n</span></div>
<div class="m ln" style="left:0;top:317px;width:28px;text-align:right">151</div>
<div class="m" style="left:31px;top:317px;"><span class="cm"> *      Utility function which converts a local address to global.</span></div>
<div class="m ln" style="left:0;top:332px;width:28px;text-align:right">152</div>
<div class="m" style="left:31px;top:332px;"><span class="cm"> *</span></div>
<div class="m ln" style="left:0;top:347px;width:28px;text-align:right">153</div>
<div class="m" style="left:31px;top:347px;"><span class="cm"> *  <span class="sq">@param</span>[in]  <span class="sq">addr</span></span></div>
<div class="m ln" style="left:0;top:362px;width:28px;text-align:right">154</div>
<div class="m" style="left:31px;top:362px;"><span class="cm"> *      Local address to be converted</span></div>
<div class="m ln" style="left:0;top:377px;width:28px;text-align:right">155</div>
<div class="m" style="left:31px;top:377px;"><span class="cm"> *</span></div>
<div class="m ln" style="left:0;top:392px;width:28px;text-align:right">156</div>
<div class="m" style="left:31px;top:392px;"><span class="cm"> *  <span class="sq">@retval</span></span></div>
<div class="m ln" style="left:0;top:407px;width:28px;text-align:right">157</div>
<div class="m" style="left:31px;top:407px;"><span class="cm"> *      Global Address</span></div>
<div class="m ln" style="left:0;top:422px;width:28px;text-align:right">158</div>
<div class="m" style="left:31px;top:422px;"><span class="cm"> */</span></div>
<div class="m ln" style="left:0;top:437px;width:28px;text-align:right">159</div>
<div class="m sel" style="left:31px;top:437px;color:#fff">static uint32_t l2_global_address (uint32_t addr)</div>
<div class="m ln" style="left:0;top:452px;width:28px;text-align:right">160</div>
<div class="m sel" style="left:31px;top:452px;color:#fff">{</div>
<div class="m ln" style="left:0;top:467px;width:28px;text-align:right">161</div>
<div class="m sel" style="left:31px;top:467px;color:#fff">    uint32_t coreNum;</div>
<div class="m ln" style="left:0;top:482px;width:28px;text-align:right">162</div>
<div class="m sel" style="left:31px;top:482px;color:#fff"></div>
<div class="m ln" style="left:0;top:497px;width:28px;text-align:right">163</div>
<div class="m sel" style="left:31px;top:497px;color:#fff">    /* Get the core number. */</div>
<div class="m ln" style="left:0;top:512px;width:28px;text-align:right">164</div>
<div class="m sel" style="left:31px;top:512px;color:#fff">    coreNum = <span class="fn">CSL_chipReadReg</span> (<span class="it">CSL_CHIP_DNUM</span>);</div>
<div class="m ln" style="left:0;top:527px;width:28px;text-align:right">165</div>
<div class="m sel" style="left:31px;top:527px;color:#fff"></div>
<div class="m ln" style="left:0;top:542px;width:28px;text-align:right">166</div>
<div class="m sel" style="left:31px;top:542px;color:#fff">    /* Compute the global address. */</div>
<div class="m ln" style="left:0;top:557px;width:28px;text-align:right">167</div>
<div class="m sel" style="left:31px;top:557px;color:#fff">    <span class="fn">return</span> (addr + (0x10000000 + (coreNum*0x1000000)));</div>
<div class="m ln" style="left:0;top:572px;width:28px;text-align:right">168</div>
<div class="m sel" style="left:31px;top:572px;color:#fff">}</div>
<div class="m ln" style="left:0;top:587px;width:28px;text-align:right">169</div>
<div class="m" style="left:31px;top:587px;"></div>
<div class="m ln" style="left:0;top:602px;width:28px;text-align:right">170</div>
<div class="m" style="left:31px;top:602px;"><span class="cm">/**</span></div>
<div class="m ln" style="left:0;top:617px;width:28px;text-align:right">171</div>
<div class="m" style="left:31px;top:617px;"><span class="cm"> *  @b Description</span></div>
<div class="m ln" style="left:0;top:632px;width:28px;text-align:right">172</div>
<div class="m" style="left:31px;top:632px;"><span class="cm"> *  @n</span></div>
<div class="m ln" style="left:0;top:647px;width:28px;text-align:right">173</div>
<div class="m" style="left:31px;top:647px;"><span class="cm"> *      Application registered DIO ISR.</span></div>
<div class="m ln" style="left:0;top:662px;width:28px;text-align:right">174</div>
<div class="m" style="left:31px;top:662px;"><span class="cm"> *</span></div>
<div class="m ln" style="left:0;top:677px;width:28px;text-align:right">175</div>
<div class="m" style="left:31px;top:677px;"><span class="cm"> *  <span class="sq">@retval</span></span></div>
<div class="m ln" style="left:0;top:692px;width:28px;text-align:right">176</div>
<div class="m" style="left:31px;top:692px;"><span class="cm"> *      Not Applicable.</span></div>
<div class="m ln" style="left:0;top:707px;width:28px;text-align:right">177</div>
<div class="m" style="left:31px;top:707px;"><span class="cm"> */</span></div>
<div class="m ln" style="left:0;top:722px;width:28px;text-align:right">178</div>
<div class="m" style="left:31px;top:722px;"><span class="kw">void</span> <span class="fn">myDIOIsr</span>(<span class="td">UArg</span> argument)</div>
<div class="m ln" style="left:0;top:737px;width:28px;text-align:right">179</div>
<div class="m" style="left:31px;top:737px;">{</div>
<div class="m ln" style="left:0;top:752px;width:28px;text-align:right">180</div>
<div class="m" style="left:31px;top:752px;">    <span class="td">uint8_t</span>     intDstDoorbell[4];</div>
<div class="m ln" style="left:0;top:767px;width:28px;text-align:right">181</div>
<div class="m" style="left:31px;top:767px;"></div>
</div>
<div class="trough" style="left:1084px;top:301px;width:16px;height:772px;"></div>
<div class="b3" style="left:1084px;top:301px;width:16px;height:16px;"></div>
<div style="left:1088px;top:306px;width:8px;height:5px"><svg width="8" height="5"><path d="M0 4.5 L4 0.5 L8 4.5Z" fill="#000"/></svg></div>
<div class="b3" style="left:1084px;top:1057px;width:16px;height:16px;"></div>
<div style="left:1088px;top:1063px;width:8px;height:5px"><svg width="8" height="5"><path d="M0 0.5 L4 4.5 L8 0.5Z" fill="#000"/></svg></div>
<div class="b3" style="left:1084px;top:359px;width:16px;height:17px;"></div>
<div style="left:1100px;top:301px;width:12px;height:772px;background:#808080"></div>
<div class="trough" style="left:388px;top:1073px;width:696px;height:16px;"></div>
<div class="b3" style="left:388px;top:1073px;width:16px;height:16px;"></div>
<div style="left:393px;top:1077px;width:5px;height:8px"><svg width="5" height="8"><path d="M4.5 0 L0.5 4 L4.5 8Z" fill="#000"/></svg></div>
<div class="b3" style="left:1068px;top:1073px;width:16px;height:16px;"></div>
<div style="left:1074px;top:1077px;width:5px;height:8px"><svg width="5" height="8"><path d="M0.5 0 L4.5 4 L0.5 8Z" fill="#000"/></svg></div>
<div style="left:347px;top:1073px;width:41px;height:16px;background:#808080"></div>
<div style="left:1084px;top:1073px;width:28px;height:16px;background:#808080"></div>
<div class="pb" style="left:1119px;top:275px;width:812px;height:817px;"></div>
<div class="tabg" style="left:1120px;top:276px;width:129px;height:25px"></div>
<div style="left:1124px;top:279px;width:16px;height:16px"><svg width="16" height="16" viewBox="0 0 16 16"><path d="M2.5 1.5 L9.5 1.5 L12.5 4.5 L12.5 14.5 L2.5 14.5Z" fill="#f8fbff" stroke="#b89a50"/><text x="3.5" y="12" font-family="Liberation Sans" font-size="9" font-weight="bold" fill="#1e5aa0">.c</text></svg></div>
<div class="t" style="left:1142px;top:278px;height:20px;line-height:20px;">srio_laneconfig.c</div>
<div style="left:1231px;top:282px;width:10px;height:10px"><svg width="10" height="10"><path d="M0.5 0.5 L3.5 0.5 L5 2 L6.5 0.5 L9.5 0.5 L9.5 3.5 L8 5 L9.5 6.5 L9.5 9.5 L6.5 9.5 L5 8 L3.5 9.5 L0.5 9.5 L0.5 6.5 L2 5 L0.5 3.5Z" fill="#fff" stroke="#303030" stroke-width="1.1"/></svg></div>
<div style="left:1896px;top:281px;width:10px;height:5px"><svg width="10" height="5"><rect x="0.8" y="0.8" width="8.4" height="3" rx="1" fill="#fff" stroke="#303030" stroke-width="1.5"/></svg></div>
<div style="left:1914px;top:281px;width:10px;height:10px"><svg width="10" height="10"><rect x="0.8" y="0.8" width="8.4" height="8.4" rx="1" fill="#fff" stroke="#303030" stroke-width="1.5"/><rect x="1" y="2.6" width="8" height="1.4" fill="#303030"/></svg></div>
<div style="left:1120px;top:300px;width:810px;height:791px;background:#808080"></div>
<div style="left:1122px;top:301px;width:12px;height:772px;background-color:#000;background-image:linear-gradient(45deg,#808080 25%,transparent 25%,transparent 75%,#808080 75%),linear-gradient(45deg,#808080 25%,transparent 25%,transparent 75%,#808080 75%);background-size:2px 2px;background-position:0 0,1px 1px"></div>
<div class="wh" style="left:1134px;top:301px;width:765px;height:772px;"></div>
<div style="left:1155px;top:301px;width:1px;height:772px;background:#808080"></div>
<div style="left:1158px;top:706px;width:740px;height:15px;background:#e8f2fe"></div>
<div style="left:1134px;top:301px;width:765px;height:772px;overflow:hidden">
<div class="m ln" style="left:0;top:2px;width:21px;text-align:right">334</div>
<div class="m" style="left:24px;top:2px">    <span class="cm">/* Get boot complete flag setting */</span></div>
<div class="m ln" style="left:0;top:17px;width:21px;text-align:right">335</div>
<div class="m" style="left:24px;top:17px">    CSL_SRIO_GetBootComplete (hSrio, &amp;bootCompleteFlag);</div>
<div class="m ln" style="left:0;top:32px;width:21px;text-align:right">336</div>
<div class="m" style="left:24px;top:32px"></div>
<div class="m ln" style="left:0;top:47px;width:21px;text-align:right">337</div>
<div class="m" style="left:24px;top:47px">    <span class="kw">if</span> (bootCompleteFlag == 1)</div>
<div class="m ln" style="left:0;top:62px;width:21px;text-align:right">338</div>
<div class="m" style="left:24px;top:62px">        <span class="cm">/* Set boot complete to be 0; to enable writing to the SRIO registers. */</span></div>
<div class="m ln" style="left:0;top:77px;width:21px;text-align:right">339</div>
<div class="m" style="left:24px;top:77px">        CSL_SRIO_SetBootComplete (hSrio, 0);</div>
<div class="m ln" style="left:0;top:92px;width:21px;text-align:right">340</div>
<div class="m" style="left:24px;top:92px"></div>
<div class="m ln" style="left:0;top:107px;width:21px;text-align:right">341</div>
<div class="m" style="left:24px;top:107px">    <span class="cm">/* Set <span class="sq">rx/tx</span> <span class="sq">config</span> values based on the lane rate specified */</span></div>
<div class="m ln" style="left:0;top:122px;width:21px;text-align:right">342</div>
<div class="m" style="left:24px;top:122px">    <span class="kw">switch</span> (linkRateGbps)</div>
<div class="m ln" style="left:0;top:137px;width:21px;text-align:right">343</div>
<div class="m" style="left:24px;top:137px">    {</div>
<div class="m ln" style="left:0;top:152px;width:21px;text-align:right">344</div>
<div class="m" style="left:24px;top:152px">        <span class="kw">case</span> <span class="en">srio_lane_rate_5p000Gbps</span>:  <span class="cm">/* <span class="sq">Pll</span> setting determines 5.0 <span class="sq">Gpbs</span> or 3.125 <span class="sq">Gbps</span> */</span></div>
<div class="m ln" style="left:0;top:167px;width:21px;text-align:right">345</div>
<div class="m" style="left:24px;top:167px">        <span class="kw">case</span> <span class="en">srio_lane_rate_3p125Gbps</span>:  <span class="cm">/* Same <span class="sq">Tx</span> and <span class="sq">Rx</span> settings for 5.0 <span class="sq">Gbps</span> or 3.125 <span class="sq">Gbps</span> */</span></div>
<div class="m ln" style="left:0;top:182px;width:21px;text-align:right">346</div>
<div class="m" style="left:24px;top:182px">            rxConfig = 0x00440495;</div>
<div class="m ln" style="left:0;top:197px;width:21px;text-align:right">347</div>
<div class="m" style="left:24px;top:197px">                        <span class="cm">// (0)     Enable Receiver</span></div>
<div class="m ln" style="left:0;top:212px;width:21px;text-align:right">348</div>
<div class="m" style="left:24px;top:212px">                        <span class="cm">// (1-3)   Bus Width 010b (20 bit)</span></div>
<div class="m ln" style="left:0;top:227px;width:21px;text-align:right">349</div>
<div class="m" style="left:24px;top:227px">                        <span class="cm">// (4-5)   Half rate. Two data samples per PLL output clock cycle</span></div>
<div class="m ln" style="left:0;top:242px;width:21px;text-align:right">350</div>
<div class="m" style="left:24px;top:242px">                        <span class="cm">// (6)     Normal polarity</span></div>
<div class="m ln" style="left:0;top:257px;width:21px;text-align:right">351</div>
<div class="m" style="left:24px;top:257px">                        <span class="cm">// (7-9)   Termination programmed to be 001</span></div>
<div class="m ln" style="left:0;top:272px;width:21px;text-align:right">352</div>
<div class="m" style="left:24px;top:272px">                        <span class="cm">// (10-11) Comma Alignment enabled</span></div>
<div class="m ln" style="left:0;top:287px;width:21px;text-align:right">353</div>
<div class="m" style="left:24px;top:287px">                        <span class="cm">// (12-14) Loss of signal detection disabled</span></div>
<div class="m ln" style="left:0;top:302px;width:21px;text-align:right">354</div>
<div class="m" style="left:24px;top:302px">                        <span class="cm">// (15-17) First order. Phase offset tracking up to +-488 <span class="sq">ppm</span></span></div>
<div class="m ln" style="left:0;top:317px;width:21px;text-align:right">355</div>
<div class="m" style="left:24px;top:317px">                        <span class="cm">// (18-20) Fully adaptive equalization</span></div>
<div class="m ln" style="left:0;top:332px;width:21px;text-align:right">356</div>
<div class="m" style="left:24px;top:332px">                        <span class="cm">// (22)    Offset compensation enabled</span></div>
<div class="m ln" style="left:0;top:347px;width:21px;text-align:right">357</div>
<div class="m" style="left:24px;top:347px">                        <span class="cm">// (23-24) <span class="sq">Loopback</span> disabled</span></div>
<div class="m ln" style="left:0;top:362px;width:21px;text-align:right">358</div>
<div class="m" style="left:24px;top:362px">                        <span class="cm">// (25-27) Test pattern mode disabled</span></div>
<div class="m ln" style="left:0;top:377px;width:21px;text-align:right">359</div>
<div class="m" style="left:24px;top:377px">                        <span class="cm">// (28-31) Reserved</span></div>
<div class="m ln" style="left:0;top:392px;width:21px;text-align:right">360</div>
<div class="m" style="left:24px;top:392px"></div>
<div class="m ln" style="left:0;top:407px;width:21px;text-align:right">361</div>
<div class="m" style="left:24px;top:407px">            txConfig = 0x00180795;</div>
<div class="m ln" style="left:0;top:422px;width:21px;text-align:right">362</div>
<div class="m" style="left:24px;top:422px">            <span class="cm">//txConfig = 0x00181F15;</span></div>
<div class="m ln" style="left:0;top:437px;width:21px;text-align:right">363</div>
<div class="m" style="left:24px;top:437px">                        <span class="cm">// (0)     Enable Transmitter</span></div>
<div class="m ln" style="left:0;top:452px;width:21px;text-align:right">364</div>
<div class="m" style="left:24px;top:452px">                        <span class="cm">// (1-3)   Bus Width 010b (20 bit)</span></div>
<div class="m ln" style="left:0;top:467px;width:21px;text-align:right">365</div>
<div class="m" style="left:24px;top:467px">                        <span class="cm">// (4-5)   Half rate. Two data samples per PLL output clock cycle</span></div>
<div class="m ln" style="left:0;top:482px;width:21px;text-align:right">366</div>
<div class="m" style="left:24px;top:482px">                        <span class="cm">// (6)     Normal polarity</span></div>
<div class="m ln" style="left:0;top:497px;width:21px;text-align:right">367</div>
<div class="m" style="left:24px;top:497px">                        <span class="cm">// (7-10)  Swing max.</span></div>
<div class="m ln" style="left:0;top:512px;width:21px;text-align:right">368</div>
<div class="m" style="left:24px;top:512px">                        <span class="cm">// (11-13) Precursor Tap weight 0%</span></div>
<div class="m ln" style="left:0;top:527px;width:21px;text-align:right">369</div>
<div class="m" style="left:24px;top:527px">                        <span class="cm">// (14-18) Adjacent post cursor Tap weight 0%</span></div>
<div class="m ln" style="left:0;top:542px;width:21px;text-align:right">370</div>
<div class="m" style="left:24px;top:542px">                        <span class="cm">// (19)    Transmitter <span class="sq">pre</span> and post cursor FIR filter update</span></div>
<div class="m ln" style="left:0;top:557px;width:21px;text-align:right">371</div>
<div class="m" style="left:24px;top:557px">                        <span class="cm">// (20)    Synchronization master</span></div>
<div class="m ln" style="left:0;top:572px;width:21px;text-align:right">372</div>
<div class="m" style="left:24px;top:572px">                        <span class="cm">// (21-22) <span class="sq">Loopback</span> disabled</span></div>
<div class="m ln" style="left:0;top:587px;width:21px;text-align:right">373</div>
<div class="m" style="left:24px;top:587px">                        <span class="cm">// (23-25) Test pattern mode disabled</span></div>
<div class="m ln" style="left:0;top:602px;width:21px;text-align:right">374</div>
<div class="m" style="left:24px;top:602px">                        <span class="cm">// (26-31) Reserved</span></div>
<div class="m ln" style="left:0;top:617px;width:21px;text-align:right">375</div>
<div class="m" style="left:24px;top:617px">            <span class="kw">break</span>;</div>
<div class="m ln" style="left:0;top:632px;width:21px;text-align:right">376</div>
<div class="m" style="left:24px;top:632px">        <span class="kw">case</span> <span class="en">srio_lane_rate_2p500Gbps</span>:  <span class="cm">/* <span class="sq">Tx</span> and <span class="sq">Rx</span> settings for 2.50 <span class="sq">Gbps</span> */</span></div>
<div class="m ln" style="left:0;top:647px;width:21px;text-align:right">377</div>
<div class="m" style="left:24px;top:647px">            rxConfig = 0x004404A5;</div>
<div class="m ln" style="left:0;top:662px;width:21px;text-align:right">378</div>
<div class="m" style="left:24px;top:662px">                        <span class="cm">// (4-5)   Quarter rate. One data sample per PLL output clock cycle</span></div>
<div class="m ln" style="left:0;top:677px;width:21px;text-align:right">379</div>
<div class="m" style="left:24px;top:677px"></div>
<div class="m ln" style="left:0;top:692px;width:21px;text-align:right">380</div>
<div class="m" style="left:24px;top:692px">            txConfig = 0x001807A5;</div>
<div class="m ln" style="left:0;top:707px;width:21px;text-align:right">381</div>
<div class="m" style="left:24px;top:707px">                        <span class="cm">// (4-5)   Quarter rate. One data sample per PLL output clock cycle</span></div>
<div class="m ln" style="left:0;top:722px;width:21px;text-align:right">382</div>
<div class="m" style="left:24px;top:722px">            <span class="kw">break</span>;</div>
<div class="m ln" style="left:0;top:737px;width:21px;text-align:right">383</div>
<div class="m" style="left:24px;top:737px">        <span class="kw">case</span> <span class="en">srio_lane_rate_1p250Gbps</span>:  <span class="cm">/* <span class="sq">Tx</span> and <span class="sq">Rx</span> settings for 1.25 <span class="sq">Gbps</span> */</span></div>
<div class="m ln" style="left:0;top:752px;width:21px;text-align:right">384</div>
<div class="m" style="left:24px;top:752px">            rxConfig = 0x004404B5;</div>
<div class="m ln" style="left:0;top:767px;width:21px;text-align:right">385</div>
<div class="m" style="left:24px;top:767px">                        <span class="cm">// (4-5)   Eighth rate. One data sample every two PLL output clock cycles</span></div>
</div>
<div class="trough" style="left:1899px;top:301px;width:16px;height:772px;"></div>
<div class="b3" style="left:1899px;top:301px;width:16px;height:16px;"></div>
<div style="left:1903px;top:306px;width:8px;height:5px"><svg width="8" height="5"><path d="M0 4.5 L4 0.5 L8 4.5Z" fill="#000"/></svg></div>
<div class="b3" style="left:1899px;top:1057px;width:16px;height:16px;"></div>
<div style="left:1903px;top:1063px;width:8px;height:5px"><svg width="8" height="5"><path d="M0 0.5 L4 4.5 L8 0.5Z" fill="#000"/></svg></div>
<div class="b3" style="left:1899px;top:817px;width:16px;height:75px;"></div>
<div style="left:1915px;top:301px;width:13px;height:772px;background:#808080"></div>
<div class="trough" style="left:1158px;top:1073px;width:741px;height:16px;"></div>
<div class="b3" style="left:1158px;top:1073px;width:16px;height:16px;"></div>
<div style="left:1163px;top:1077px;width:5px;height:8px"><svg width="5" height="8"><path d="M4.5 0 L0.5 4 L4.5 8Z" fill="#000"/></svg></div>
<div class="b3" style="left:1883px;top:1073px;width:16px;height:16px;"></div>
<div style="left:1889px;top:1077px;width:5px;height:8px"><svg width="5" height="8"><path d="M0.5 0 L4.5 4 L0.5 8Z" fill="#000"/></svg></div>
<div class="b3" style="left:1174px;top:1073px;width:553px;height:16px;"></div>
<div style="left:1134px;top:1073px;width:24px;height:16px;background:#808080"></div>
<div style="left:1899px;top:1073px;width:16px;height:16px;background:#808080"></div>
<div class="pb" style="left:344px;top:1095px;width:771px;height:251px;"></div>
<div class="tabg" style="left:345px;top:1096px;width:130px;height:25px"></div>
<div style="left:349px;top:1099px;width:16px;height:16px"><svg width="16" height="16" viewBox="0 0 16 16"><path d="M2 3 L14 3 L14 12 L2 12Z" fill="#e0e0e0" stroke="#707070"/><path d="M4 6 L11 6 M4 9 L11 9" stroke="#707070"/><path d="M1 8 L5 4 L5 12Z" fill="#a0a0a0"/></svg></div>
<div class="t" style="left:367px;top:1098px;height:20px;line-height:20px;">Scripting Console</div>
<div style="left:458px;top:1102px;width:10px;height:10px"><svg width="10" height="10"><path d="M0.5 0.5 L3.5 0.5 L5 2 L6.5 0.5 L9.5 0.5 L9.5 3.5 L8 5 L9.5 6.5 L9.5 9.5 L6.5 9.5 L5 8 L3.5 9.5 L0.5 9.5 L0.5 6.5 L2 5 L0.5 3.5Z" fill="#fff" stroke="#303030" stroke-width="1.1"/></svg></div>
<div style="left:989px;top:1099px;width:16px;height:16px"><svg width="16" height="16" viewBox="0 0 16 16"><rect x="2" y="5" width="11" height="9" fill="#e4f0fb" stroke="#4a8ad0"/><path d="M8 10 L14 3" stroke="#30a030" stroke-width="1.5"/></svg></div>
<div style="left:1012px;top:1099px;width:16px;height:16px"><svg width="16" height="16" viewBox="0 0 16 16"><path d="M1 5 L6 5 L7 3 L12 3 L12 13 L1 13Z" fill="#f8d060" stroke="#b08020"/><path d="M3 13 L5 8 L15 8 L12 13Z" fill="#f0c040" stroke="#b08020"/></svg></div>
<div style="left:1037px;top:1099px;width:16px;height:16px"><svg width="16" height="16" viewBox="0 0 16 16"><path d="M2 1 L9 1 L12 4 L12 14 L2 14Z" fill="#f4f4f4" stroke="#909090"/><path d="M4 5 L10 5 M4 8 L10 8" stroke="#808080"/><circle cx="12" cy="12" r="3" fill="#808080"/></svg></div>
<div style="left:1061px;top:1099px;width:10px;height:6px"><svg width="10" height="6"><path d="M1 1 L9 1 L5 5Z" fill="#fff" stroke="#303030" stroke-width="1.3" stroke-linejoin="round"/></svg></div>
<div style="left:1080px;top:1099px;width:10px;height:5px"><svg width="10" height="5"><rect x="0.8" y="0.8" width="8.4" height="3" rx="1" fill="#fff" stroke="#303030" stroke-width="1.5"/></svg></div>
<div style="left:1098px;top:1099px;width:10px;height:10px"><svg width="10" height="10"><rect x="0.8" y="0.8" width="8.4" height="8.4" rx="1" fill="#fff" stroke="#303030" stroke-width="1.5"/><rect x="1" y="2.6" width="8" height="1.4" fill="#303030"/></svg></div>
<div style="left:345px;top:1120px;width:770px;height:225px;background:#808080"></div>
<div class="wh" style="left:346px;top:1121px;width:750px;height:222px;"></div>
<div style="left:346px;top:1121px;width:750px;height:222px;overflow:hidden">
<div class="m" style="left:1px;top:-1px">disableLog</div>
<div class="m" style="left:197px;top:-1px">disconnect</div>
<div class="m" style="left:393px;top:-1px">enableLog</div>
<div class="m" style="left:589px;top:-1px">eval</div>
<div class="m" style="left:1px;top:14px">execCmdFile</div>
<div class="m" style="left:197px;top:14px">exit</div>
<div class="m" style="left:393px;top:14px">expAdd</div>
<div class="m" style="left:589px;top:14px">expRemove</div>
<div class="m" style="left:1px;top:29px">expRemoveAll</div>
<div class="m" style="left:197px;top:29px">expViewId</div>
<div class="m" style="left:393px;top:29px">exportAll</div>
<div class="m" style="left:589px;top:29px">getBinary</div>
<div class="m" style="left:1px;top:44px">getDecimal</div>
<div class="m" style="left:197px;top:44px">getFieldNames</div>
<div class="m" style="left:393px;top:44px">getFloat</div>
<div class="m" style="left:589px;top:44px">getHex</div>
<div class="m" style="left:1px;top:59px">getNatural</div>
<div class="m" style="left:197px;top:59px">getQValue</div>
<div class="m" style="left:393px;top:59px">getRecord</div>
<div class="m" style="left:589px;top:59px">getRecordCount</div>
<div class="m" style="left:1px;top:74px">getSelectedDebugSessions</div>
<div class="m" style="left:197px;top:74px">getText</div>
<div class="m" style="left:393px;top:74px">getValue</div>
<div class="m" style="left:589px;top:74px">halt</div>
<div class="m" style="left:1px;top:89px">help</div>
<div class="m" style="left:197px;top:89px">hotmenu_addGel</div>
<div class="m" style="left:393px;top:89px">hotmenu_addJSFunction</div>
<div class="m" style="left:589px;top:89px">hotmenu_addScript</div>
<div class="m" style="left:1px;top:104px">hotmenu_remove</div>
<div class="m" style="left:197px;top:104px">hotmenu_removeAll</div>
<div class="m" style="left:393px;top:104px">listJSFiles</div>
<div class="m" style="left:589px;top:104px">loadCoff</div>
<div class="m" style="left:1px;top:119px">loadData</div>
<div class="m" style="left:197px;top:119px">loadJSFile</div>
<div class="m" style="left:393px;top:119px">loadKeyword</div>
<div class="m" style="left:589px;top:119px">loadProg</div>
<div class="m" style="left:1px;top:134px">loadRaw</div>
<div class="m" style="left:197px;top:134px">maximize</div>
<div class="m" style="left:393px;top:134px">memFill</div>
<div class="m" style="left:589px;top:134px">memViewId</div>
<div class="m" style="left:1px;top:149px">mmAdd</div>
<div class="m" style="left:197px;top:149px">mmEnable</div>
<div class="m" style="left:393px;top:149px">mmRemove</div>
<div class="m" style="left:589px;top:149px">mmReset</div>
<div class="m" style="left:1px;top:164px">modViewId</div>
<div class="m" style="left:197px;top:164px">openAnalysisView</div>
<div class="m" style="left:393px;top:164px">openView</div>
<div class="m" style="left:589px;top:164px">openView2</div>
<div class="m" style="left:1px;top:179px">pinConnect</div>
<div class="m" style="left:197px;top:179px">pinDisconnect</div>
<div class="m" style="left:393px;top:179px">pinList</div>
<div class="m" style="left:589px;top:179px">portConnect</div>
<div class="m" style="left:1px;top:194px">portDisconnect</div>
<div class="m" style="left:197px;top:194px">portList</div>
<div class="m" style="left:393px;top:194px">print</div>
<div class="m" style="left:589px;top:194px">probViewId</div>
<div class="m" style="left:1px;top:209px">projViewId</div>
<div class="m" style="left:197px;top:209px">ptvCurrentMode</div>
<div class="m" style="left:393px;top:209px">ptvLookupAddress</div>
</div>
<div class="trough" style="left:1096px;top:1121px;width:16px;height:222px;"></div>
<div class="b3" style="left:1096px;top:1121px;width:16px;height:16px;"></div>
<div style="left:1100px;top:1126px;width:8px;height:5px"><svg width="8" height="5"><path d="M0 4.5 L4 0.5 L8 4.5Z" fill="#000"/></svg></div>
<div class="b3" style="left:1096px;top:1327px;width:16px;height:16px;"></div>
<div style="left:1100px;top:1333px;width:8px;height:5px"><svg width="8" height="5"><path d="M0 0.5 L4 4.5 L8 0.5Z" fill="#000"/></svg></div>
<div class="b3" style="left:1096px;top:1242px;width:16px;height:52px;"></div>
<div class="pb" style="left:1119px;top:1095px;width:812px;height:251px;"></div>
<div class="tabg" style="left:1120px;top:1096px;width:90px;height:25px"></div>
<div style="left:1124px;top:1099px;width:16px;height:16px"><svg width="16" height="16" viewBox="0 0 16 16"><rect x="1.5" y="1.5" width="11" height="13" fill="#f4f8ff" stroke="#7080a0"/><circle cx="7" cy="5" r="2.5" fill="#e02020"/><path d="M4 12 L7 8 L10 12Z" fill="#f0a020"/></svg></div>
<div class="t" style="left:1141px;top:1098px;height:20px;line-height:20px;">Problems</div>
<div style="left:1193px;top:1102px;width:10px;height:10px"><svg width="10" height="10"><path d="M0.5 0.5 L3.5 0.5 L5 2 L6.5 0.5 L9.5 0.5 L9.5 3.5 L8 5 L9.5 6.5 L9.5 9.5 L6.5 9.5 L5 8 L3.5 9.5 L0.5 9.5 L0.5 6.5 L2 5 L0.5 3.5Z" fill="#fff" stroke="#303030" stroke-width="1.1"/></svg></div>
<div style="left:1878px;top:1099px;width:10px;height:6px"><svg width="10" height="6"><path d="M1 1 L9 1 L5 5Z" fill="#fff" stroke="#303030" stroke-width="1.3" stroke-linejoin="round"/></svg></div>
<div style="left:1897px;top:1099px;width:10px;height:5px"><svg width="10" height="5"><rect x="0.8" y="0.8" width="8.4" height="3" rx="1" fill="#fff" stroke="#303030" stroke-width="1.5"/></svg></div>
<div style="left:1915px;top:1099px;width:10px;height:10px"><svg width="10" height="10"><rect x="0.8" y="0.8" width="8.4" height="8.4" rx="1" fill="#fff" stroke="#303030" stroke-width="1.5"/><rect x="1" y="2.6" width="8" height="1.4" fill="#303030"/></svg></div>
<div style="left:1120px;top:1120px;width:810px;height:225px;background:#808080"></div>
<div class="t" style="left:1121px;top:1120px;height:17px;line-height:17px;">0 items</div>
<div class="wh" style="left:1121px;top:1136px;width:807px;height:207px;"></div>
<div class="hdr" style="left:1121px;top:1136px;width:250px;height:17px;"></div>
<div class="t" style="left:1127px;top:1137px;height:17px;line-height:17px;">Description</div>
<div class="hdr" style="left:1371px;top:1136px;width:75px;height:17px;"></div>
<div class="t" style="left:1377px;top:1137px;height:17px;line-height:17px;">Resource</div>
<div class="hdr" style="left:1446px;top:1136px;width:100px;height:17px;"></div>
<div class="t" style="left:1452px;top:1137px;height:17px;line-height:17px;">Path</div>
<div class="hdr" style="left:1546px;top:1136px;width:75px;height:17px;"></div>
<div class="t" style="left:1552px;top:1137px;height:17px;line-height:17px;">Location</div>
<div class="hdr" style="left:1621px;top:1136px;width:75px;height:17px;"></div>
<div class="t" style="left:1627px;top:1137px;height:17px;line-height:17px;">Type</div>
<div class="hdr" style="left:1696px;top:1136px;width:232px;height:17px;"></div>
<div style="left:1187px;top:1141px;width:9px;height:5px"><svg width="9" height="5"><path d="M0.5 4.5 L4.5 0.5 L8.5 4.5Z" fill="#b8b8b8"/></svg></div>
<div style="left:1121px;top:1168px;width:807px;height:1px;background:#a0a0a0"></div>
<div style="left:1121px;top:1184px;width:807px;height:1px;background:#a0a0a0"></div>
<div style="left:1121px;top:1200px;width:807px;height:1px;background:#a0a0a0"></div>
<div style="left:1121px;top:1216px;width:807px;height:1px;background:#a0a0a0"></div>
<div style="left:1121px;top:1232px;width:807px;height:1px;background:#a0a0a0"></div>
<div style="left:1121px;top:1248px;width:807px;height:1px;background:#a0a0a0"></div>
<div style="left:1121px;top:1264px;width:807px;height:1px;background:#a0a0a0"></div>
<div style="left:1121px;top:1280px;width:807px;height:1px;background:#a0a0a0"></div>
<div style="left:1121px;top:1296px;width:807px;height:1px;background:#a0a0a0"></div>
<div style="left:1121px;top:1312px;width:807px;height:1px;background:#a0a0a0"></div>
<div style="left:1121px;top:1328px;width:807px;height:1px;background:#a0a0a0"></div>
<div style="left:1121px;top:1344px;width:807px;height:1px;background:#a0a0a0"></div>
<div style="left:1371px;top:1153px;width:1px;height:190px;background:#a0a0a0"></div>
<div style="left:1446px;top:1153px;width:1px;height:190px;background:#a0a0a0"></div>
<div style="left:1546px;top:1153px;width:1px;height:190px;background:#a0a0a0"></div>
<div style="left:1621px;top:1153px;width:1px;height:190px;background:#a0a0a0"></div>
<div style="left:1696px;top:1153px;width:1px;height:190px;background:#a0a0a0"></div>
<div style="left:19px;top:1350px;width:3px;height:17px;border-left:1px solid #505050;border-right:1px solid #b8b8b8"></div>
<div style="left:90px;top:1350px;width:3px;height:17px;border-left:1px solid #505050;border-right:1px solid #b8b8b8"></div>
<div style="left:172px;top:1350px;width:3px;height:17px;border-left:1px solid #505050;border-right:1px solid #b8b8b8"></div>
<div style="left:191px;top:1350px;width:3px;height:17px;border-left:1px solid #505050;border-right:1px solid #b8b8b8"></div>
<div style="left:1425px;top:1350px;width:3px;height:17px;border-left:1px solid #505050;border-right:1px solid #b8b8b8"></div>
<div style="left:1514px;top:1350px;width:3px;height:17px;border-left:1px solid #505050;border-right:1px solid #b8b8b8"></div>
<div style="left:1598px;top:1350px;width:3px;height:17px;border-left:1px solid #505050;border-right:1px solid #b8b8b8"></div>
<div style="left:1683px;top:1350px;width:3px;height:17px;border-left:1px solid #505050;border-right:1px solid #b8b8b8"></div>
<div style="left:30px;top:1350px;width:16px;height:16px"><svg width="16" height="16" viewBox="0 0 16 16"><rect x="3" y="5" width="5" height="10" fill="#f0f0f0" stroke="#909090"/><rect x="3" y="5" width="5" height="2" fill="#3060a0"/><path d="M12 1 L12 7 M9 4 L15 4" stroke="#e0b020" stroke-width="1.5"/></svg></div>
<div class="t" style="left:99px;top:1351px;height:17px;line-height:17px;">Licensed</div>
<div class="t" style="left:1432px;top:1353px;height:17px;line-height:17px;">Writable</div>
<div class="t" style="left:1521px;top:1353px;height:17px;line-height:17px;">Smart Insert</div>
<div class="t" style="left:1607px;top:1353px;height:17px;line-height:17px;">169 : 1</div>
</body></html>
